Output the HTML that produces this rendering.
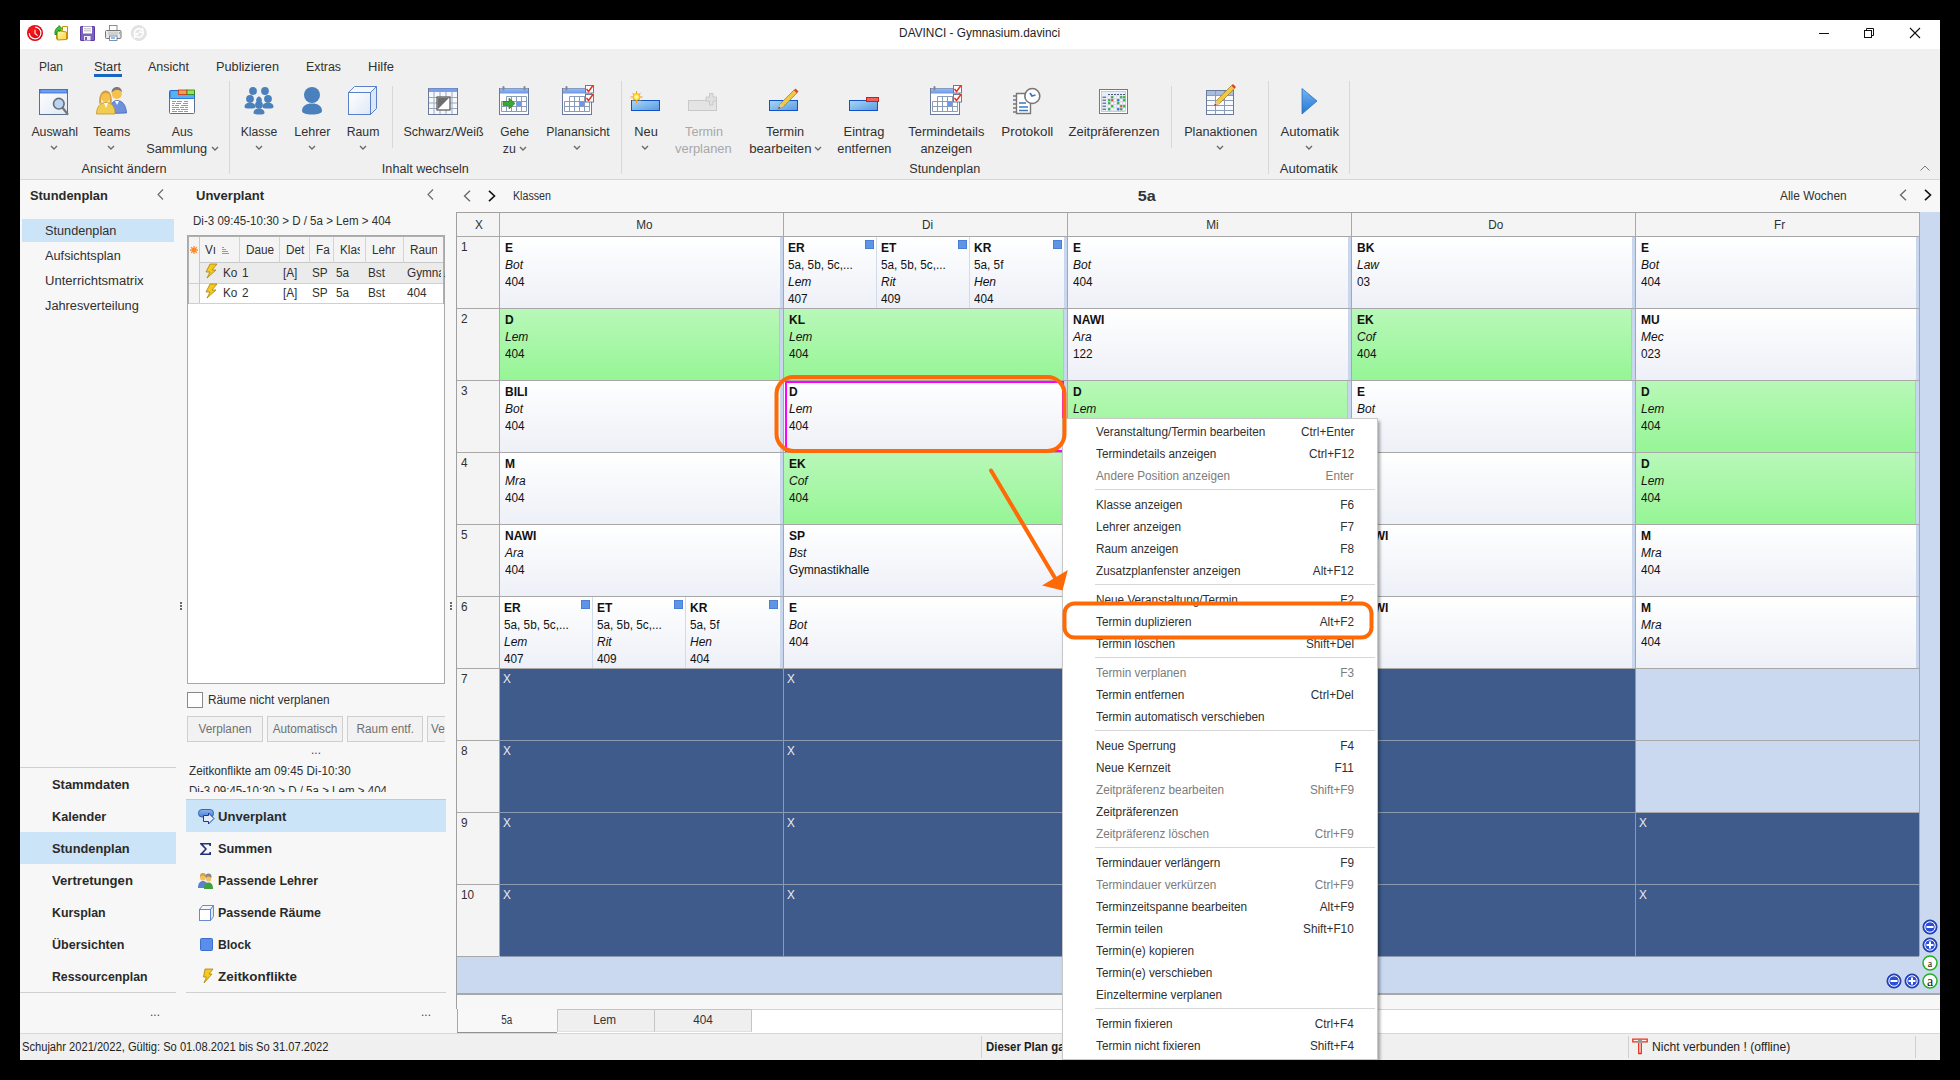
<!DOCTYPE html>
<html><head><meta charset="utf-8"><style>
html,body{margin:0;padding:0;}
body{width:1960px;height:1080px;background:#000;position:relative;overflow:hidden;font-family:"Liberation Sans",sans-serif;color:#262626;}
.r{position:absolute;}
.t{position:absolute;white-space:nowrap;}
</style></head><body>
<div class="r" style="left:20px;top:20px;width:1920px;height:1040px;background:#f7f7f7;"></div>
<div class="r" style="left:20px;top:20px;width:1920px;height:29px;background:#ffffff;"></div>
<div class="t" style="left:898.42px;top:26.84px;font-size:12px;line-height:12px;color:#1e1e1e;transform:scaleX(0.9868);transform-origin:center center;">DAVINCI - Gymnasium.davinci</div>
<div class="r" style="left:1819px;top:33px;width:10px;height:1.2px;background:#111;"></div>
<svg class="r" style="left:1862px;top:26px" width="14" height="14" viewBox="0 0 14 14"><rect x="2.5" y="4.5" width="7" height="7" fill="none" stroke="#111"/><path d="M4.5 4.5V2.5h7v7h-2" fill="none" stroke="#111"/></svg>
<svg class="r" style="left:1908px;top:26px" width="14" height="14" viewBox="0 0 14 14"><path d="M2 2L12 12M12 2L2 12" stroke="#111" stroke-width="1.1"/></svg>
<svg class="r" style="left:20px;top:20px" width="140" height="29" viewBox="20 20 140 29">
<defs><radialGradient id="qRed" cx="0.35" cy="0.35" r="0.7"><stop offset="0" stop-color="#ff1a1a"/><stop offset="1" stop-color="#d00010"/></radialGradient>
<linearGradient id="qFold" x1="0" y1="0" x2="1" y2="1"><stop offset="0" stop-color="#fff8c0"/><stop offset="1" stop-color="#f8d838"/></linearGradient></defs>
<circle cx="35" cy="33" r="8" fill="url(#qRed)"/>
<path d="M29.3 33.2A5.8 5.8 0 1 0 35.2 27.2" fill="none" stroke="#fff" stroke-width="1.2"/>
<path d="M35 29.8V33.5L37.6 35.6" fill="none" stroke="#fff" stroke-width="1.1"/>
<path d="M62.5 26.5h5v12.5h-11v-8.5h6z" fill="#fffbe0" stroke="#c8900a" stroke-width="1"/>
<path d="M57 30.5l9.5 1.5v7.5l-9 0.5z" fill="url(#qFold)" stroke="#c8900a" stroke-width="1"/>
<path d="M55 34.5c-0.5-4 1-7 4-7.5v-1.5l3 3-3 3v-1.5c-1.5 0.5-2.5 2.5-2.5 4.5z" fill="#3cc83c" stroke="#0a800a" stroke-width="0.8"/>
<rect x="80.5" y="26.5" width="14" height="14" rx="0.5" fill="#7a62c0" stroke="#5a3aa8"/>
<rect x="83" y="26.5" width="9" height="7" fill="#fff"/>
<path d="M84 28.8h7M84 30.8h7" stroke="#aaa" stroke-width="0.8"/>
<rect x="84" y="36" width="6.5" height="4.5" fill="#eee"/><rect x="85.2" y="37" width="1.6" height="3" fill="#5a3aa8"/>
<rect x="109.5" y="25.5" width="7.5" height="5" fill="#fff" stroke="#5a7898" stroke-width="0.8"/>
<rect x="105.5" y="30.5" width="15.5" height="8" rx="1" fill="#e8e8e8" stroke="#777" stroke-width="1"/>
<rect x="108" y="31.5" width="10" height="3.5" fill="#d0d0d0"/>
<rect x="109.5" y="36" width="7.5" height="4.5" fill="#fff" stroke="#5a7898" stroke-width="0.8"/><rect x="111" y="37" width="4" height="2" fill="#8ac0f0"/>
<circle cx="119.5" cy="33" r="0.7" fill="#2c2"/>
<circle cx="138.8" cy="33" r="7.5" fill="#e4e4e4" stroke="#dadada" stroke-width="0.8"/>
<path d="M134.5 33a4.3 4.3 0 0 1 7.3-3l0.8-1.2 0.6 3.8-3.6-0.6 1-1M143 33a4.3 4.3 0 0 1-7.3 3l-0.8 1.2-0.6-3.8 3.6 0.6-1 1" fill="none" stroke="#fff" stroke-width="1.4"/>
</svg>
<div class="r" style="left:20px;top:49px;width:1920px;height:130px;background:#f0f0f0;"></div>
<div class="r" style="left:20px;top:179px;width:1920px;height:1px;background:#d6d6d6;"></div>
<div class="t" style="left:39.00px;top:60.84px;font-size:12px;line-height:12px;color:#303030;transform:scaleX(0.9992);transform-origin:left center;">Plan</div>
<div class="t" style="left:94.00px;top:60.84px;font-size:12px;line-height:12px;color:#303030;transform:scaleX(1.0654);transform-origin:left center;">Start</div>
<div class="t" style="left:148.00px;top:60.84px;font-size:12px;line-height:12px;color:#303030;transform:scaleX(1.0419);transform-origin:left center;">Ansicht</div>
<div class="t" style="left:216.00px;top:60.84px;font-size:12px;line-height:12px;color:#303030;transform:scaleX(1.0611);transform-origin:left center;">Publizieren</div>
<div class="t" style="left:306.00px;top:60.84px;font-size:12px;line-height:12px;color:#303030;transform:scaleX(1.0291);transform-origin:left center;">Extras</div>
<div class="t" style="left:368.00px;top:60.84px;font-size:12px;line-height:12px;color:#303030;transform:scaleX(1.0830);transform-origin:left center;">Hilfe</div>
<div class="r" style="left:94px;top:74px;width:28px;height:3px;background:#1665c1;"></div>
<div class="r" style="left:229px;top:81px;width:1px;height:93px;background:#d8d8d8;"></div>
<div class="r" style="left:621px;top:81px;width:1px;height:93px;background:#d8d8d8;"></div>
<div class="r" style="left:1268px;top:81px;width:1px;height:93px;background:#d8d8d8;"></div>
<div class="r" style="left:1349px;top:81px;width:1px;height:93px;background:#d8d8d8;"></div>
<div class="r" style="left:392px;top:86px;width:1px;height:62px;background:#d8d8d8;"></div>
<div class="r" style="left:1171px;top:86px;width:1px;height:62px;background:#d8d8d8;"></div>
<div class="t" style="left:83.97px;top:162.84px;font-size:12px;line-height:12px;color:#303030;transform:scaleX(1.0618);transform-origin:center center;">Ansicht ändern</div>
<div class="t" style="left:383.64px;top:162.84px;font-size:12px;line-height:12px;color:#303030;transform:scaleX(1.0518);transform-origin:center center;">Inhalt wechseln</div>
<div class="t" style="left:911.30px;top:162.84px;font-size:12px;line-height:12px;color:#303030;transform:scaleX(1.0535);transform-origin:center center;">Stundenplan</div>
<div class="t" style="left:1282.32px;top:162.84px;font-size:12px;line-height:12px;color:#303030;transform:scaleX(1.0870);transform-origin:center center;">Automatik</div>
<svg class="r" style="left:1920px;top:165px" width="10" height="6" viewBox="0 0 10 6"><path d="M0.5 5.5L5 1L9.5 5.5" fill="none" stroke="#777" stroke-width="1"/></svg>
<div class="t" style="left:31.82px;top:125.84px;font-size:12px;line-height:12px;color:#303030;transform:scaleX(1.0274);transform-origin:center center;">Auswahl</div>
<svg class="r" style="left:50px;top:145px" width="8" height="6" viewBox="0 0 8 6"><path d="M1 1L4 4L7 1" fill="none" stroke="#6a6a6a" stroke-width="1.4"/></svg>
<div class="t" style="left:93.83px;top:125.84px;font-size:12px;line-height:12px;color:#303030;transform:scaleX(1.0468);transform-origin:center center;">Teams</div>
<svg class="r" style="left:107px;top:145px" width="8" height="6" viewBox="0 0 8 6"><path d="M1 1L4 4L7 1" fill="none" stroke="#6a6a6a" stroke-width="1.4"/></svg>
<div class="t" style="left:171.66px;top:125.84px;font-size:12px;line-height:12px;color:#303030;transform:scaleX(1.0156);transform-origin:center center;">Aus</div>
<div class="t" style="left:148.32px;top:142.84px;font-size:12px;line-height:12px;color:#303030;transform:scaleX(1.0635);transform-origin:center center;">Sammlung</div>
<svg class="r" style="left:211px;top:146px" width="8" height="6" viewBox="0 0 8 6"><path d="M1 1L4 4L7 1" fill="none" stroke="#6a6a6a" stroke-width="1.4"/></svg>
<div class="t" style="left:240.99px;top:125.84px;font-size:12px;line-height:12px;color:#303030;transform:scaleX(1.0134);transform-origin:center center;">Klasse</div>
<svg class="r" style="left:255px;top:145px" width="8" height="6" viewBox="0 0 8 6"><path d="M1 1L4 4L7 1" fill="none" stroke="#6a6a6a" stroke-width="1.4"/></svg>
<div class="t" style="left:295.16px;top:125.84px;font-size:12px;line-height:12px;color:#303030;transform:scaleX(1.0464);transform-origin:center center;">Lehrer</div>
<svg class="r" style="left:308px;top:145px" width="8" height="6" viewBox="0 0 8 6"><path d="M1 1L4 4L7 1" fill="none" stroke="#6a6a6a" stroke-width="1.4"/></svg>
<div class="t" style="left:347.49px;top:125.84px;font-size:12px;line-height:12px;color:#303030;transform:scaleX(1.0215);transform-origin:center center;">Raum</div>
<svg class="r" style="left:359px;top:145px" width="8" height="6" viewBox="0 0 8 6"><path d="M1 1L4 4L7 1" fill="none" stroke="#6a6a6a" stroke-width="1.4"/></svg>
<div class="t" style="left:405.44px;top:125.84px;font-size:12px;line-height:12px;color:#303030;transform:scaleX(1.0372);transform-origin:center center;">Schwarz/Weiß</div>
<div class="t" style="left:500.32px;top:125.84px;font-size:12px;line-height:12px;color:#303030;transform:scaleX(0.9879);transform-origin:center center;">Gehe</div>
<div class="t" style="left:503.16px;top:142.84px;font-size:12px;line-height:12px;color:#303030;transform:scaleX(1.0257);transform-origin:center center;">zu</div>
<svg class="r" style="left:519px;top:146px" width="8" height="6" viewBox="0 0 8 6"><path d="M1 1L4 4L7 1" fill="none" stroke="#6a6a6a" stroke-width="1.4"/></svg>
<div class="t" style="left:546.98px;top:125.84px;font-size:12px;line-height:12px;color:#303030;transform:scaleX(1.0203);transform-origin:center center;">Planansicht</div>
<svg class="r" style="left:573px;top:145px" width="8" height="6" viewBox="0 0 8 6"><path d="M1 1L4 4L7 1" fill="none" stroke="#6a6a6a" stroke-width="1.4"/></svg>
<div class="t" style="left:634.99px;top:125.84px;font-size:12px;line-height:12px;color:#303030;transform:scaleX(1.0675);transform-origin:center center;">Neu</div>
<svg class="r" style="left:641px;top:145px" width="8" height="6" viewBox="0 0 8 6"><path d="M1 1L4 4L7 1" fill="none" stroke="#6a6a6a" stroke-width="1.4"/></svg>
<div class="t" style="left:686.00px;top:125.84px;font-size:12px;line-height:12px;color:#a8a8a8;transform:scaleX(1.0498);transform-origin:center center;">Termin</div>
<div class="t" style="left:677.15px;top:142.84px;font-size:12px;line-height:12px;color:#a8a8a8;transform:scaleX(1.0758);transform-origin:center center;">verplanen</div>
<div class="t" style="left:766.70px;top:125.84px;font-size:12px;line-height:12px;color:#303030;transform:scaleX(1.0609);transform-origin:center center;">Termin</div>
<div class="t" style="left:751.64px;top:142.84px;font-size:12px;line-height:12px;color:#303030;transform:scaleX(1.0985);transform-origin:center center;">bearbeiten</div>
<svg class="r" style="left:814px;top:146px" width="8" height="6" viewBox="0 0 8 6"><path d="M1 1L4 4L7 1" fill="none" stroke="#6a6a6a" stroke-width="1.4"/></svg>
<div class="t" style="left:845.49px;top:125.84px;font-size:12px;line-height:12px;color:#303030;transform:scaleX(1.0730);transform-origin:center center;">Eintrag</div>
<div class="t" style="left:839.15px;top:142.84px;font-size:12px;line-height:12px;color:#303030;transform:scaleX(1.0649);transform-origin:center center;">entfernen</div>
<div class="t" style="left:910.65px;top:125.84px;font-size:12px;line-height:12px;color:#303030;transform:scaleX(1.0750);transform-origin:center center;">Termindetails</div>
<div class="t" style="left:921.64px;top:142.84px;font-size:12px;line-height:12px;color:#303030;transform:scaleX(1.0614);transform-origin:center center;">anzeigen</div>
<div class="t" style="left:1003.66px;top:125.84px;font-size:12px;line-height:12px;color:#303030;transform:scaleX(1.1137);transform-origin:center center;">Protokoll</div>
<div class="t" style="left:1072.48px;top:125.84px;font-size:12px;line-height:12px;color:#303030;transform:scaleX(1.0827);transform-origin:center center;">Zeitpräferenzen</div>
<div class="t" style="left:1185.81px;top:125.84px;font-size:12px;line-height:12px;color:#303030;transform:scaleX(1.0520);transform-origin:center center;">Planaktionen</div>
<svg class="r" style="left:1216px;top:145px" width="8" height="6" viewBox="0 0 8 6"><path d="M1 1L4 4L7 1" fill="none" stroke="#6a6a6a" stroke-width="1.4"/></svg>
<div class="t" style="left:1282.62px;top:125.84px;font-size:12px;line-height:12px;color:#303030;transform:scaleX(1.0983);transform-origin:center center;">Automatik</div>
<svg class="r" style="left:1305px;top:145px" width="8" height="6" viewBox="0 0 8 6"><path d="M1 1L4 4L7 1" fill="none" stroke="#6a6a6a" stroke-width="1.4"/></svg>
<svg class="r" style="left:0;top:0" width="1960" height="180" viewBox="0 0 1960 180">
<defs>
<linearGradient id="gBar" x1="0" y1="0" x2="1" y2="1"><stop offset="0" stop-color="#a8d8f8"/><stop offset="1" stop-color="#5a9ae0"/></linearGradient>
<linearGradient id="gWin" x1="0" y1="0" x2="1" y2="1"><stop offset="0" stop-color="#ffffff"/><stop offset="1" stop-color="#dfe8f6"/></linearGradient>
<linearGradient id="gHdr" x1="0" y1="0" x2="0" y2="1"><stop offset="0" stop-color="#9bbcf4"/><stop offset="1" stop-color="#6b96e8"/></linearGradient>
<linearGradient id="gTri" x1="0" y1="0" x2="0" y2="1"><stop offset="0" stop-color="#7ab8f0"/><stop offset="0.5" stop-color="#4a94e2"/><stop offset="1" stop-color="#2a78d0"/></linearGradient>
<radialGradient id="gSun"><stop offset="0" stop-color="#ffffe0"/><stop offset="0.6" stop-color="#ffe840"/><stop offset="1" stop-color="#f0a020"/></radialGradient>
</defs>
<!-- Auswahl -->
<rect x="39.5" y="89.5" width="28" height="25" fill="url(#gWin)" stroke="#5a7090"/>
<rect x="40" y="89.5" width="27" height="3.5" fill="#6d9cf0" stroke="#3a6ad8" stroke-width="0.8"/>
<path d="M62 107L67.5 114" stroke="#777" stroke-width="2.2" stroke-linecap="round"/>
<circle cx="58.8" cy="103.7" r="5.3" fill="#b8d4f4" stroke="#6c6c6c" stroke-width="1.6"/>
<!-- Teams -->
<path d="M113 113c0-6-3-10-7-10h-2c4 0 7 4 7 10z" fill="#6a8ad8"/>
<path d="M110 113.5c-1-7 2-13 7-13s9 4 9.5 12.5z" fill="#6f90da" stroke="#4468b8" stroke-width="0.8"/>
<path d="M115 101l2 4 2-4z" fill="#fff"/>
<circle cx="116.8" cy="94" r="5" fill="#f6c04c"/>
<path d="M111.5 93c0-4 2.5-6 5.3-6s5.3 2 5.3 5.5c-1-2-3-2.8-5-2.8s-4.5 1.3-5.6 3.3z" fill="#7a7a7a"/>
<path d="M96.5 114c0-7 3.5-11.5 9.5-11.5s9 4.5 9 11.5z" fill="#f2cc50" stroke="#c09a20" stroke-width="0.8"/>
<path d="M104 103l2 5 2-5z" fill="#fff"/>
<path d="M99.5 104c-1-4 0-13 6-13.5s7 9 6 13.5l-2-1c1-3 0-8-4-8s-5 5-4 8z" fill="#d0a040"/>
<circle cx="105.7" cy="97.5" r="4.6" fill="#f6c04c"/>
<!-- Aus Sammlung -->
<rect x="169.5" y="90.5" width="25" height="23" rx="1" fill="#fff" stroke="#5a7090"/>
<rect x="170" y="90.5" width="24.5" height="8" rx="1" fill="#58b0f0" stroke="#1060d0" stroke-width="0.8"/>
<rect x="178.5" y="90" width="8.5" height="4.5" fill="#f0a050" stroke="#d03010" stroke-width="0.8"/>
<rect x="187" y="90" width="7.5" height="4.5" fill="#98e060" stroke="#308010" stroke-width="0.8"/>
<g stroke="#8a9ab8" stroke-width="1">
<path d="M172 101.5h4M177 101.5h5M184 101.5h4M172 103.5h3M176 103.5h5M183 103.5h5M172 105.5h2M175 105.5h4M181 105.5h7M172 107.5h7M180 107.5h4M185 107.5h3M172 109.5h3M176 109.5h4M181 109.5h7M172 111.5h5M178 111.5h5M184 111.5h4"/>
</g>
<!-- Klasse -->
<g fill="#4a80bc">
<circle cx="253" cy="91" r="3.9"/><circle cx="265" cy="91" r="3.9"/>
<path d="M256 101c0-3 2-4.5 3-4.5v7z"/><path d="M262 101c0-3-2-4.5-3-4.5v7z"/>
<circle cx="250" cy="98.8" r="3.9"/><circle cx="268" cy="98.8" r="3.9"/>
<path d="M244.5 107c0-3 2.5-4.5 5.5-4.5s5.5 1.5 5.5 4.5c0 1-2 1.5-5.5 1.5s-5.5-.5-5.5-1.5z"/>
<path d="M262.5 107c0-3 2.5-4.5 5.5-4.5s5.5 1.5 5.5 4.5c0 1-2 1.5-5.5 1.5s-5.5-.5-5.5-1.5z"/>
<circle cx="259" cy="104.8" r="3.9"/>
<path d="M253.5 113c0-3 2.5-4.5 5.5-4.5s5.5 1.5 5.5 4.5c0 1-2 1.5-5.5 1.5s-5.5-.5-5.5-1.5z"/>
</g>
<!-- Lehrer -->
<g fill="#4a80bc"><circle cx="312" cy="95" r="8"/><path d="M302 111c0-5 4-7.5 10-7.5s10 2.5 10 7.5c0 2-4 3.5-10 3.5s-10-1.5-10-3.5z"/></g>
<!-- Raum -->
<path d="M348.5 92.5L354.5 86.5H376.5L370.5 92.5Z" fill="#f4f8fe" stroke="#5a80c8"/>
<path d="M370.5 92.5L376.5 86.5V108.5L370.5 114.5Z" fill="#dce8fa" stroke="#5a80c8"/>
<rect x="348.5" y="92.5" width="22" height="22" fill="url(#gWin)" stroke="#5a80c8"/>
<!-- Schwarz/Weiss -->
<rect x="428.5" y="88.5" width="29" height="26" fill="#f6f8fc" stroke="#6a7a98"/>
<rect x="429" y="88.5" width="28" height="3.5" fill="#78a0ee"/>
<g stroke="#98a8c0" stroke-width="1"><path d="M434 92v22M440 92v22M446 92v22M452 92v22M429 97.5h28M429 103h28M429 108.5h28"/></g>
<rect x="437" y="97" width="13" height="13" fill="#fff" stroke="#555" stroke-width="1.2"/>
<path d="M437.6 97.6h11.8L437.6 109.4z" fill="#6e6e6e"/>
<!-- Gehe zu -->
<rect x="499.5" y="88.5" width="29" height="26" fill="#fff" stroke="#6a7a98"/>
<rect x="500" y="88.5" width="28" height="5" fill="url(#gHdr)"/>
<rect x="502.5" y="86" width="2" height="4.5" rx="1" fill="#888"/><rect x="523.5" y="86" width="2" height="4.5" rx="1" fill="#888"/>
<g stroke="#8a9cbc" stroke-width="1" fill="none"><path d="M506.5 96.5h20v15h-25v-10h5zM506.5 101.5v10M511.5 96.5v15M516.5 96.5v15M521.5 96.5v15M501.5 106.5h25M506.5 101.5h20"/></g>
<rect x="517" y="102" width="4" height="4" fill="#6a9af0"/>
<path d="M503 101.5h6v-3.5l6 5.5-6 5.5v-3.5h-6z" fill="#3aa830" stroke="#1a7010" stroke-width="0.6"/>
<!-- Planansicht -->
<rect x="562.5" y="88.5" width="29" height="26" fill="#fff" stroke="#6a7a98"/>
<rect x="563" y="88.5" width="28" height="5" fill="url(#gHdr)"/>
<rect x="565.5" y="86" width="2" height="4.5" rx="1" fill="#888"/>
<g stroke="#8a9cbc" stroke-width="1" fill="none"><path d="M569.5 96.5h20v15h-25v-10h5zM569.5 101.5v10M574.5 96.5v15M579.5 96.5v15M584.5 96.5v15M564.5 106.5h25M569.5 101.5h20"/></g>
<rect x="580" y="102" width="4" height="4" fill="#6a9af0"/>
<rect x="585.5" y="85.5" width="8" height="7.5" fill="#fff" stroke="#6a7a98"/><path d="M586.5 89l2 2.5 4.5-6" fill="none" stroke="#e8301a" stroke-width="1.5"/>
<rect x="585.5" y="94.5" width="8" height="7.5" fill="#fff" stroke="#6a7a98"/><path d="M586.5 98l2 2.5 4.5-6" fill="none" stroke="#e8301a" stroke-width="1.5"/>
<!-- Neu -->
<rect x="631.5" y="100.5" width="28" height="10" fill="url(#gBar)" stroke="#1050c8"/>
<g stroke="#f0a020" stroke-width="1"><path d="M636.5 91v12M630.5 97h12M632.3 92.8l8.4 8.4M640.7 92.8l-8.4 8.4"/></g>
<circle cx="636.5" cy="97" r="3.8" fill="url(#gSun)"/>
<!-- Termin verplanen -->
<rect x="688.5" y="100.5" width="28" height="10" fill="#e4e4e4" stroke="#c8c8c8"/>
<path d="M709.5 93.5h3.5v3.5h3.5v4h-3.5v4h-3.5v-4h-3.5v-4h3.5z" fill="#e0e0e0" stroke="#c8c8c8"/>
<!-- Termin bearbeiten -->
<rect x="769.5" y="100.5" width="28" height="10" fill="url(#gBar)" stroke="#1050c8"/>
<path d="M778.5 108.5l2-5 13.5-13.5 3 3-13.5 13.5z" fill="#f0c848" stroke="#a07818" stroke-width="0.7"/>
<path d="M778.5 108.5l2-5 3 3z" fill="#e8c8a0"/><path d="M778.3 108.7l0.8-2 1.2 1.2z" fill="#333"/>
<path d="M794 90l1.5-1.5 3 3-1.5 1.5z" fill="#e84020"/>
<!-- Eintrag entfernen -->
<rect x="849.5" y="100.5" width="28" height="10" fill="url(#gBar)" stroke="#1050c8"/>
<rect x="866.5" y="97.5" width="12" height="4" fill="#f06060" stroke="#c82010"/>
<!-- Termindetails -->
<rect x="930.5" y="88.5" width="29" height="26" fill="#fff" stroke="#6a7a98"/>
<rect x="931" y="88.5" width="28" height="5" fill="url(#gHdr)"/>
<rect x="933.5" y="86" width="2" height="4.5" rx="1" fill="#888"/>
<g stroke="#8a9cbc" stroke-width="1" fill="none"><path d="M937.5 96.5h20v15h-25v-10h5zM937.5 101.5v10M942.5 96.5v15M947.5 96.5v15M952.5 96.5v15M932.5 106.5h25M937.5 101.5h20"/></g>
<rect x="948" y="102" width="4" height="4" fill="#6a9af0"/>
<rect x="953.5" y="85.5" width="8" height="7.5" fill="#fff" stroke="#6a7a98"/><path d="M954.5 89l2 2.5 4.5-6" fill="none" stroke="#e8301a" stroke-width="1.5"/>
<rect x="953.5" y="94.5" width="8" height="7.5" fill="#fff" stroke="#6a7a98"/><path d="M954.5 98l2 2.5 4.5-6" fill="none" stroke="#e8301a" stroke-width="1.5"/>
<!-- Protokoll -->
<path d="M1016.5 93.5h14v20h-14z" fill="#fff" stroke="#777" stroke-width="1.4"/>
<g stroke="#777" stroke-width="1.6"><path d="M1013 96h4M1013 100h4M1013 104h4M1013 108h4M1013 112h4"/></g>
<g stroke="#3a78c0" stroke-width="1.3"><path d="M1019 103h7M1019 107h9M1019 110.5h9"/></g>
<circle cx="1032.3" cy="96" r="7.5" fill="#fff" stroke="#777" stroke-width="1.6"/>
<path d="M1030 93l2 3 3.5-1" fill="none" stroke="#3a78c0" stroke-width="1.8"/>
<!-- Zeitpraeferenzen -->
<rect x="1099.5" y="89.5" width="28" height="24" fill="#fff" stroke="#6a7a98"/>
<rect x="1101.5" y="91.5" width="24" height="20" fill="#e8eef8" stroke="#a8b4c8" stroke-width="0.6"/>
<path d="M1108 94.5h2" stroke="#4a5a80" stroke-width="1"/>
<path d="M1111 94.5h2" stroke="#4a5a80" stroke-width="1"/>
<path d="M1114 94.5h2" stroke="#4a5a80" stroke-width="1"/>
<path d="M1117 94.5h2" stroke="#4a5a80" stroke-width="1"/>
<path d="M1120 94.5h2" stroke="#4a5a80" stroke-width="1"/>
<path d="M1123 94.5h2" stroke="#4a5a80" stroke-width="1"/>
<path d="M1102.5 97.2h3.5" stroke="#4a5a80" stroke-width="1.1"/>
<rect x="1108" y="96" width="2.4" height="2.4" fill="#ffffff" stroke="#b8c0d0" stroke-width="0.4"/>
<rect x="1111" y="96" width="2.4" height="2.4" fill="#30b030" stroke="#b8c0d0" stroke-width="0.4"/>
<rect x="1114" y="96" width="2.4" height="2.4" fill="#ffffff" stroke="#b8c0d0" stroke-width="0.4"/>
<rect x="1117" y="96" width="2.4" height="2.4" fill="#ffffff" stroke="#b8c0d0" stroke-width="0.4"/>
<rect x="1120" y="96" width="2.4" height="2.4" fill="#30b030" stroke="#b8c0d0" stroke-width="0.4"/>
<rect x="1123" y="96" width="2.4" height="2.4" fill="#30b030" stroke="#b8c0d0" stroke-width="0.4"/>
<path d="M1102.5 100.2h3.5" stroke="#4a5a80" stroke-width="1.1"/>
<rect x="1108" y="99" width="2.4" height="2.4" fill="#30b030" stroke="#b8c0d0" stroke-width="0.4"/>
<rect x="1111" y="99" width="2.4" height="2.4" fill="#e84a2a" stroke="#b8c0d0" stroke-width="0.4"/>
<rect x="1114" y="99" width="2.4" height="2.4" fill="#ffffff" stroke="#b8c0d0" stroke-width="0.4"/>
<rect x="1117" y="99" width="2.4" height="2.4" fill="#2a6ae0" stroke="#b8c0d0" stroke-width="0.4"/>
<rect x="1120" y="99" width="2.4" height="2.4" fill="#ffffff" stroke="#b8c0d0" stroke-width="0.4"/>
<rect x="1123" y="99" width="2.4" height="2.4" fill="#30b030" stroke="#b8c0d0" stroke-width="0.4"/>
<path d="M1102.5 103.2h3.5" stroke="#4a5a80" stroke-width="1.1"/>
<rect x="1108" y="102" width="2.4" height="2.4" fill="#30b030" stroke="#b8c0d0" stroke-width="0.4"/>
<rect x="1111" y="102" width="2.4" height="2.4" fill="#ffffff" stroke="#b8c0d0" stroke-width="0.4"/>
<rect x="1114" y="102" width="2.4" height="2.4" fill="#ffffff" stroke="#b8c0d0" stroke-width="0.4"/>
<rect x="1117" y="102" width="2.4" height="2.4" fill="#30b030" stroke="#b8c0d0" stroke-width="0.4"/>
<rect x="1120" y="102" width="2.4" height="2.4" fill="#ffffff" stroke="#b8c0d0" stroke-width="0.4"/>
<rect x="1123" y="102" width="2.4" height="2.4" fill="#ffffff" stroke="#b8c0d0" stroke-width="0.4"/>
<path d="M1102.5 106.2h3.5" stroke="#4a5a80" stroke-width="1.1"/>
<rect x="1108" y="105" width="2.4" height="2.4" fill="#ffffff" stroke="#b8c0d0" stroke-width="0.4"/>
<rect x="1111" y="105" width="2.4" height="2.4" fill="#30b030" stroke="#b8c0d0" stroke-width="0.4"/>
<rect x="1114" y="105" width="2.4" height="2.4" fill="#ffffff" stroke="#b8c0d0" stroke-width="0.4"/>
<rect x="1117" y="105" width="2.4" height="2.4" fill="#ffffff" stroke="#b8c0d0" stroke-width="0.4"/>
<rect x="1120" y="105" width="2.4" height="2.4" fill="#e84a2a" stroke="#b8c0d0" stroke-width="0.4"/>
<rect x="1123" y="105" width="2.4" height="2.4" fill="#30b030" stroke="#b8c0d0" stroke-width="0.4"/>
<path d="M1102.5 109.2h3.5" stroke="#4a5a80" stroke-width="1.1"/>
<rect x="1108" y="108" width="2.4" height="2.4" fill="#30b030" stroke="#b8c0d0" stroke-width="0.4"/>
<rect x="1111" y="108" width="2.4" height="2.4" fill="#ffffff" stroke="#b8c0d0" stroke-width="0.4"/>
<rect x="1114" y="108" width="2.4" height="2.4" fill="#ffffff" stroke="#b8c0d0" stroke-width="0.4"/>
<rect x="1117" y="108" width="2.4" height="2.4" fill="#2a6ae0" stroke="#b8c0d0" stroke-width="0.4"/>
<rect x="1120" y="108" width="2.4" height="2.4" fill="#30b030" stroke="#b8c0d0" stroke-width="0.4"/>
<rect x="1123" y="108" width="2.4" height="2.4" fill="#ffffff" stroke="#b8c0d0" stroke-width="0.4"/>
<!-- Planaktionen -->
<rect x="1206.5" y="90.5" width="27" height="24" fill="#f8faff" stroke="#6a7a98"/>
<rect x="1207" y="91" width="26" height="4.5" fill="#a8bce0"/>
<g stroke="#8a9cbc" stroke-width="1"><path d="M1215.5 91v23M1224.5 91v23M1207 95.5h26M1207 100.5h26M1207 105.5h26M1207 110.5h26"/></g>
<path d="M1214.5 105.5l2-5 15-15 3 3-15 15z" fill="#f0c848" stroke="#a07818" stroke-width="0.7"/>
<path d="M1214.5 105.5l2-5 3 3z" fill="#e8c8a0"/><path d="M1214.3 105.7l0.8-2 1.2 1.2z" fill="#333"/>
<path d="M1231.5 85.5l1.5-1.5 3 3-1.5 1.5z" fill="#e84020"/>
<!-- Automatik -->
<path d="M1302 88.5L1317 101L1302 114z" fill="url(#gTri)" stroke="#2a70c8" stroke-width="0.8" stroke-linejoin="round"/>
</svg>

<div class="t" style="left:30.00px;top:189.00px;font-size:13px;line-height:13px;font-weight:700;color:#2a2a2a;transform:scaleX(0.9883);transform-origin:left center;">Stundenplan</div>
<svg class="r" style="left:157px;top:189px" width="7" height="11" viewBox="0 0 7 11"><path d="M6 0.5L1 5.5L6 10.5" fill="none" stroke="#666" stroke-width="1.1"/></svg>
<div class="r" style="left:22px;top:219px;width:152px;height:23px;background:#cce4f7;"></div>
<div class="t" style="left:45.00px;top:225.42px;font-size:12.5px;line-height:12.5px;color:#303030;transform:scaleX(1.0170);transform-origin:left center;">Stundenplan</div>
<div class="t" style="left:45.00px;top:250.42px;font-size:12.5px;line-height:12.5px;color:#303030;transform:scaleX(1.0195);transform-origin:left center;">Aufsichtsplan</div>
<div class="t" style="left:45.00px;top:275.42px;font-size:12.5px;line-height:12.5px;color:#303030;transform:scaleX(1.0438);transform-origin:left center;">Unterrichtsmatrix</div>
<div class="t" style="left:45.00px;top:300.42px;font-size:12.5px;line-height:12.5px;color:#303030;transform:scaleX(1.0227);transform-origin:left center;">Jahresverteilung</div>
<div class="r" style="left:180px;top:602px;width:2px;height:2px;background:#686868;"></div>
<div class="r" style="left:180px;top:605px;width:2px;height:2px;background:#686868;"></div>
<div class="r" style="left:180px;top:608px;width:2px;height:2px;background:#686868;"></div>
<div class="r" style="left:450px;top:602px;width:2px;height:2px;background:#686868;"></div>
<div class="r" style="left:450px;top:605px;width:2px;height:2px;background:#686868;"></div>
<div class="r" style="left:450px;top:608px;width:2px;height:2px;background:#686868;"></div>
<div class="r" style="left:20px;top:767px;width:156px;height:1px;background:#d0d0d0;"></div>
<div class="r" style="left:20px;top:832px;width:156px;height:32px;background:#cce4f7;"></div>
<div class="t" style="left:52.00px;top:778.00px;font-size:13px;line-height:13px;font-weight:700;color:#2a2a2a;transform:scaleX(0.9933);transform-origin:left center;">Stammdaten</div>
<div class="t" style="left:52.00px;top:810.00px;font-size:13px;line-height:13px;font-weight:700;color:#2a2a2a;transform:scaleX(0.9761);transform-origin:left center;">Kalender</div>
<div class="t" style="left:52.00px;top:842.00px;font-size:13px;line-height:13px;font-weight:700;color:#2a2a2a;transform:scaleX(0.9858);transform-origin:left center;">Stundenplan</div>
<div class="t" style="left:52.00px;top:874.00px;font-size:13px;line-height:13px;font-weight:700;color:#2a2a2a;transform:scaleX(1.0089);transform-origin:left center;">Vertretungen</div>
<div class="t" style="left:52.00px;top:906.00px;font-size:13px;line-height:13px;font-weight:700;color:#2a2a2a;transform:scaleX(0.9513);transform-origin:left center;">Kursplan</div>
<div class="t" style="left:52.00px;top:938.00px;font-size:13px;line-height:13px;font-weight:700;color:#2a2a2a;transform:scaleX(0.9636);transform-origin:left center;">Übersichten</div>
<div class="t" style="left:52.00px;top:970.00px;font-size:13px;line-height:13px;font-weight:700;color:#2a2a2a;transform:scaleX(0.9442);transform-origin:left center;">Ressourcenplan</div>
<div class="r" style="left:20px;top:992px;width:156px;height:1px;background:#d0d0d0;"></div>
<div class="t" style="left:150.00px;top:1005.84px;font-size:12px;line-height:12px;color:#444;transform:scaleX(0.9800);transform-origin:center center;">...</div>
<div class="t" style="left:196.00px;top:189.00px;font-size:13px;line-height:13px;font-weight:700;color:#2a2a2a;transform:scaleX(1.0014);transform-origin:left center;">Unverplant</div>
<svg class="r" style="left:427px;top:189px" width="7" height="11" viewBox="0 0 7 11"><path d="M6 0.5L1 5.5L6 10.5" fill="none" stroke="#666" stroke-width="1.1"/></svg>
<div class="t" style="left:193.00px;top:214.84px;font-size:12px;line-height:12px;color:#303030;transform:scaleX(0.9621);transform-origin:left center;">Di-3 09:45-10:30 &gt; D / 5a &gt; Lem &gt; 404</div>
<div class="r" style="left:187px;top:235px;width:258px;height:449px;background:#ffffff;box-sizing:border-box;border:1px solid #a8a8a8;"></div>
<div class="r" style="left:188px;top:236px;width:256px;height:1px;background:#b0b0b0;"></div>
<div class="r" style="left:188px;top:236px;width:1px;height:68px;background:#b0b0b0;"></div>
<div class="r" style="left:443px;top:236px;width:1px;height:68px;background:#b0b0b0;"></div>
<div class="r" style="left:189px;top:237px;width:255px;height:26px;background:#f4f4f4;"></div>
<div class="r" style="left:189px;top:262px;width:255px;height:1px;background:#c8c8c8;"></div>
<div class="r" style="left:189px;top:237px;width:11px;height:66px;background:#f4f4f4;"></div>
<div class="r" style="left:200px;top:263px;width:244px;height:20px;background:#ebebeb;"></div>
<div class="r" style="left:189px;top:283px;width:255px;height:1px;background:#d0d0d0;"></div>
<div class="r" style="left:189px;top:303px;width:255px;height:1px;background:#d0d0d0;"></div>
<div class="r" style="left:199px;top:237px;width:1px;height:66px;background:#c8c8c8;"></div>
<div class="r" style="left:239px;top:237px;width:1px;height:26px;background:#d4d4d4;"></div>
<div class="r" style="left:279px;top:237px;width:1px;height:26px;background:#d4d4d4;"></div>
<div class="r" style="left:309px;top:237px;width:1px;height:26px;background:#d4d4d4;"></div>
<div class="r" style="left:333px;top:237px;width:1px;height:26px;background:#d4d4d4;"></div>
<div class="r" style="left:365px;top:237px;width:1px;height:26px;background:#d4d4d4;"></div>
<div class="r" style="left:403px;top:237px;width:1px;height:26px;background:#d4d4d4;"></div>
<svg class="r" style="left:189px;top:245px" width="10" height="10" viewBox="0 0 10 10"><g stroke="#ff8a2a" stroke-width="1.3"><path d="M5 1V9M1 5H9M2.2 2.2L7.8 7.8M7.8 2.2L2.2 7.8"/></g><circle cx="5" cy="5" r="2" fill="#ff8a2a"/></svg>
<div class="t" style="left:205.00px;top:243.84px;font-size:12px;line-height:12px;color:#303030;transform:scaleX(0.9800);transform-origin:left center;">Vı</div>
<div class="t" style="left:246.00px;top:243.84px;font-size:12px;line-height:12px;color:#303030;transform:scaleX(0.9800);transform-origin:left center;">Daue</div>
<div class="t" style="left:286.00px;top:243.84px;font-size:12px;line-height:12px;color:#303030;transform:scaleX(0.9800);transform-origin:left center;">Det</div>
<div class="t" style="left:316.00px;top:243.84px;font-size:12px;line-height:12px;color:#303030;transform:scaleX(0.9800);transform-origin:left center;">Fa</div>
<div class="t" style="left:340.00px;top:243.84px;font-size:12px;line-height:12px;color:#303030;transform:scaleX(0.9800);transform-origin:left center;">Klas</div>
<div class="t" style="left:372.00px;top:243.84px;font-size:12px;line-height:12px;color:#303030;transform:scaleX(0.9800);transform-origin:left center;">Lehr</div>
<div class="t" style="left:410.00px;top:243.84px;font-size:12px;line-height:12px;color:#303030;transform:scaleX(0.9800);transform-origin:left center;">Raun</div>
<svg class="r" style="left:222px;top:247px" width="7" height="7" viewBox="0 0 7 7"><path d="M0 0.5h2M0 2.5h4M0 4.5h6M0 6.5h7" stroke="#999" stroke-width="1"/></svg>
<div class="t" style="left:223.00px;top:267.34px;font-size:12px;line-height:12px;color:#303030;transform:scaleX(0.9800);transform-origin:left center;">Ko</div>
<div class="t" style="left:242.00px;top:267.34px;font-size:12px;line-height:12px;color:#303030;transform:scaleX(0.9800);transform-origin:left center;">1</div>
<div class="t" style="left:282.50px;top:267.34px;font-size:12px;line-height:12px;color:#303030;transform:scaleX(0.9800);transform-origin:left center;">[A]</div>
<div class="t" style="left:311.50px;top:267.34px;font-size:12px;line-height:12px;color:#303030;transform:scaleX(0.9800);transform-origin:left center;">SP</div>
<div class="t" style="left:336.00px;top:267.34px;font-size:12px;line-height:12px;color:#303030;transform:scaleX(0.9800);transform-origin:left center;">5a</div>
<div class="t" style="left:368.00px;top:267.34px;font-size:12px;line-height:12px;color:#303030;transform:scaleX(0.9800);transform-origin:left center;">Bst</div>
<div class="t" style="left:406.50px;top:267.34px;font-size:12px;line-height:12px;color:#303030;transform:scaleX(0.9800);transform-origin:left center;">Gymna</div>
<svg class="r" style="left:204px;top:263px" width="14" height="16" viewBox="0 0 14 16"><path d="M6 1h7L8 7h4L3 15l3-6H2z" fill="#f6c91e" stroke="#a88010" stroke-width="0.8"/></svg>
<div class="t" style="left:223.00px;top:287.34px;font-size:12px;line-height:12px;color:#303030;transform:scaleX(0.9800);transform-origin:left center;">Ko</div>
<div class="t" style="left:242.00px;top:287.34px;font-size:12px;line-height:12px;color:#303030;transform:scaleX(0.9800);transform-origin:left center;">2</div>
<div class="t" style="left:282.50px;top:287.34px;font-size:12px;line-height:12px;color:#303030;transform:scaleX(0.9800);transform-origin:left center;">[A]</div>
<div class="t" style="left:311.50px;top:287.34px;font-size:12px;line-height:12px;color:#303030;transform:scaleX(0.9800);transform-origin:left center;">SP</div>
<div class="t" style="left:336.00px;top:287.34px;font-size:12px;line-height:12px;color:#303030;transform:scaleX(0.9800);transform-origin:left center;">5a</div>
<div class="t" style="left:368.00px;top:287.34px;font-size:12px;line-height:12px;color:#303030;transform:scaleX(0.9800);transform-origin:left center;">Bst</div>
<div class="t" style="left:406.50px;top:287.34px;font-size:12px;line-height:12px;color:#303030;transform:scaleX(0.9800);transform-origin:left center;">404</div>
<svg class="r" style="left:204px;top:283px" width="14" height="16" viewBox="0 0 14 16"><path d="M6 1h7L8 7h4L3 15l3-6H2z" fill="#f6c91e" stroke="#a88010" stroke-width="0.8"/></svg>
<div class="r" style="left:441px;top:264px;width:2px;height:19px;background:#ebebeb;"></div>
<div class="r" style="left:443px;top:236px;width:1px;height:68px;background:#b0b0b0;"></div>
<div class="r" style="left:360px;top:240px;width:5px;height:20px;background:#f4f4f4;"></div>
<div class="r" style="left:398px;top:240px;width:5px;height:20px;background:#f4f4f4;"></div>
<div class="r" style="left:437px;top:240px;width:6px;height:20px;background:#f4f4f4;"></div>
<div class="r" style="left:187px;top:692px;width:16px;height:16px;background:#ffffff;box-sizing:border-box;border:1px solid #8a8a8a;"></div>
<div class="t" style="left:208.00px;top:693.84px;font-size:12px;line-height:12px;color:#303030;transform:scaleX(0.9854);transform-origin:left center;">Räume nicht verplanen</div>
<div class="r" style="left:187px;top:716px;width:76px;height:26px;background:#f2f2f2;box-sizing:border-box;border:1px solid #cfcfcf;"></div>
<div class="t" style="left:197.98px;top:722.84px;font-size:12px;line-height:12px;color:#707070;transform:scaleX(0.9800);transform-origin:center center;">Verplanen</div>
<div class="r" style="left:267px;top:716px;width:76px;height:26px;background:#f2f2f2;box-sizing:border-box;border:1px solid #cfcfcf;"></div>
<div class="t" style="left:271.98px;top:722.84px;font-size:12px;line-height:12px;color:#707070;transform:scaleX(0.9800);transform-origin:center center;">Automatisch</div>
<div class="r" style="left:347px;top:716px;width:76px;height:26px;background:#f2f2f2;box-sizing:border-box;border:1px solid #cfcfcf;"></div>
<div class="t" style="left:355.65px;top:722.84px;font-size:12px;line-height:12px;color:#707070;transform:scaleX(0.9800);transform-origin:center center;">Raum entf.</div>
<div class="r" style="left:427px;top:716px;width:18px;height:26px;background:#f2f2f2;box-sizing:border-box;border:1px solid #cfcfcf;border-right:none;overflow:hidden;"></div>
<div class="t" style="left:431.00px;top:722.84px;font-size:12px;line-height:12px;color:#707070;transform:scaleX(0.9800);transform-origin:left center;">Ve</div>
<div class="t" style="left:311.00px;top:743.84px;font-size:12px;line-height:12px;color:#444;transform:scaleX(0.9800);transform-origin:center center;">...</div>
<div class="t" style="left:189.00px;top:764.84px;font-size:12px;line-height:12px;color:#303030;transform:scaleX(0.9742);transform-origin:left center;">Zeitkonflikte am 09:45 Di-10:30</div>
<div class="r" style="left:186px;top:780px;width:260px;height:12px;overflow:hidden">
<div class="t" style="left:3.00px;top:4.84px;font-size:12px;line-height:12px;color:#303030;transform:scaleX(0.9621);transform-origin:left center;">Di-3 09:45-10:30 &gt; D / 5a &gt; Lem &gt; 404</div>
</div>
<div class="r" style="left:186px;top:799px;width:260px;height:1px;background:#c8c8c8;"></div>
<div class="r" style="left:186px;top:800px;width:260px;height:32px;background:#cce4f7;"></div>
<div class="t" style="left:218.00px;top:810.00px;font-size:13px;line-height:13px;font-weight:700;color:#2a2a2a;transform:scaleX(1.0073);transform-origin:left center;">Unverplant</div>
<div class="t" style="left:218.00px;top:842.00px;font-size:13px;line-height:13px;font-weight:700;color:#2a2a2a;transform:scaleX(0.9836);transform-origin:left center;">Summen</div>
<div class="t" style="left:218.00px;top:874.00px;font-size:13px;line-height:13px;font-weight:700;color:#2a2a2a;transform:scaleX(0.9544);transform-origin:left center;">Passende Lehrer</div>
<div class="t" style="left:218.00px;top:906.00px;font-size:13px;line-height:13px;font-weight:700;color:#2a2a2a;transform:scaleX(0.9567);transform-origin:left center;">Passende Räume</div>
<div class="t" style="left:218.00px;top:938.00px;font-size:13px;line-height:13px;font-weight:700;color:#2a2a2a;transform:scaleX(0.9322);transform-origin:left center;">Block</div>
<div class="t" style="left:218.00px;top:970.00px;font-size:13px;line-height:13px;font-weight:700;color:#2a2a2a;transform:scaleX(1.0318);transform-origin:left center;">Zeitkonflikte</div>
<div class="r" style="left:186px;top:992px;width:260px;height:1px;background:#d0d0d0;"></div>
<div class="t" style="left:421.00px;top:1005.84px;font-size:12px;line-height:12px;color:#444;transform:scaleX(0.9800);transform-origin:center center;">...</div>
<svg class="r" style="left:463px;top:190px" width="8" height="12" viewBox="0 0 8 12"><path d="M7 0.8L1.5 6L7 11.2" fill="none" stroke="#666" stroke-width="1.3"/></svg>
<svg class="r" style="left:488px;top:190px" width="8" height="12" viewBox="0 0 8 12"><path d="M1 0.8L6.5 6L1 11.2" fill="none" stroke="#111" stroke-width="1.6"/></svg>
<div class="t" style="left:512.50px;top:189.92px;font-size:12.5px;line-height:12.5px;color:#303030;transform:scaleX(0.8545);transform-origin:left center;">Klassen</div>
<div class="t" style="left:1139.21px;top:189.15px;font-size:14px;line-height:14px;font-weight:700;color:#333;transform:scaleX(1.1559);transform-origin:center center;">5a</div>
<div class="t" style="left:1780.00px;top:189.84px;font-size:12px;line-height:12px;color:#303030;transform:scaleX(0.9933);transform-origin:left center;">Alle Wochen</div>
<svg class="r" style="left:1899px;top:189px" width="8" height="12" viewBox="0 0 8 12"><path d="M7 0.8L1.5 6L7 11.2" fill="none" stroke="#666" stroke-width="1.3"/></svg>
<svg class="r" style="left:1924px;top:189px" width="8" height="12" viewBox="0 0 8 12"><path d="M1 0.8L6.5 6L1 11.2" fill="none" stroke="#111" stroke-width="1.6"/></svg>
<div class="r" style="left:1920px;top:212px;width:20px;height:783px;background:#cad9ef;"></div>
<div class="r" style="left:456px;top:956px;width:1464px;height:38px;background:#cad9ef;"></div>
<div class="r" style="left:456px;top:993px;width:1484px;height:2px;background:#a8a8a8;"></div>
<div class="r" style="left:457px;top:995px;width:1483px;height:14px;background:#f7f7f7;"></div>
<div class="r" style="left:456px;top:212px;width:1464px;height:744px;background:#f4f4f4;"></div>
<div class="r" style="left:456px;top:212px;width:1464px;height:1px;background:#a0a0a0;"></div>
<div class="r" style="left:456px;top:212px;width:1px;height:783px;background:#a0a0a0;"></div>
<div class="r" style="left:457px;top:236px;width:1463px;height:1px;background:#a8a8a8;"></div>
<div class="r" style="left:499px;top:213px;width:1px;height:743px;background:#a8a8a8;"></div>
<div class="r" style="left:783px;top:213px;width:1px;height:743px;background:#a8a8a8;"></div>
<div class="r" style="left:1067px;top:213px;width:1px;height:743px;background:#a8a8a8;"></div>
<div class="r" style="left:1351px;top:213px;width:1px;height:743px;background:#a8a8a8;"></div>
<div class="r" style="left:1635px;top:213px;width:1px;height:743px;background:#a8a8a8;"></div>
<div class="r" style="left:1919px;top:213px;width:1px;height:743px;background:#a8a8a8;"></div>
<div class="t" style="left:474.50px;top:218.84px;font-size:12px;line-height:12px;color:#303030;transform:scaleX(0.9800);transform-origin:center center;">X</div>
<div class="t" style="left:635.66px;top:218.84px;font-size:12px;line-height:12px;color:#303030;transform:scaleX(0.9800);transform-origin:center center;">Mo</div>
<div class="t" style="left:922.33px;top:218.84px;font-size:12px;line-height:12px;color:#303030;transform:scaleX(0.9800);transform-origin:center center;">Di</div>
<div class="t" style="left:1205.67px;top:218.84px;font-size:12px;line-height:12px;color:#303030;transform:scaleX(0.9800);transform-origin:center center;">Mi</div>
<div class="t" style="left:1488.33px;top:218.84px;font-size:12px;line-height:12px;color:#303030;transform:scaleX(0.9800);transform-origin:center center;">Do</div>
<div class="t" style="left:1774.34px;top:218.84px;font-size:12px;line-height:12px;color:#303030;transform:scaleX(0.9800);transform-origin:center center;">Fr</div>
<div class="t" style="left:460.50px;top:240.84px;font-size:12px;line-height:12px;color:#303030;transform:scaleX(0.9800);transform-origin:left center;">1</div>
<div class="r" style="left:457px;top:308px;width:42px;height:1px;background:#a8a8a8;"></div>
<div class="t" style="left:460.50px;top:312.84px;font-size:12px;line-height:12px;color:#303030;transform:scaleX(0.9800);transform-origin:left center;">2</div>
<div class="r" style="left:457px;top:380px;width:42px;height:1px;background:#a8a8a8;"></div>
<div class="t" style="left:460.50px;top:384.84px;font-size:12px;line-height:12px;color:#303030;transform:scaleX(0.9800);transform-origin:left center;">3</div>
<div class="r" style="left:457px;top:452px;width:42px;height:1px;background:#a8a8a8;"></div>
<div class="t" style="left:460.50px;top:456.84px;font-size:12px;line-height:12px;color:#303030;transform:scaleX(0.9800);transform-origin:left center;">4</div>
<div class="r" style="left:457px;top:524px;width:42px;height:1px;background:#a8a8a8;"></div>
<div class="t" style="left:460.50px;top:528.84px;font-size:12px;line-height:12px;color:#303030;transform:scaleX(0.9800);transform-origin:left center;">5</div>
<div class="r" style="left:457px;top:596px;width:42px;height:1px;background:#a8a8a8;"></div>
<div class="t" style="left:460.50px;top:600.84px;font-size:12px;line-height:12px;color:#303030;transform:scaleX(0.9800);transform-origin:left center;">6</div>
<div class="r" style="left:457px;top:668px;width:42px;height:1px;background:#a8a8a8;"></div>
<div class="t" style="left:460.50px;top:672.84px;font-size:12px;line-height:12px;color:#303030;transform:scaleX(0.9800);transform-origin:left center;">7</div>
<div class="r" style="left:457px;top:740px;width:42px;height:1px;background:#a8a8a8;"></div>
<div class="t" style="left:460.50px;top:744.84px;font-size:12px;line-height:12px;color:#303030;transform:scaleX(0.9800);transform-origin:left center;">8</div>
<div class="r" style="left:457px;top:812px;width:42px;height:1px;background:#a8a8a8;"></div>
<div class="t" style="left:460.50px;top:816.84px;font-size:12px;line-height:12px;color:#303030;transform:scaleX(0.9800);transform-origin:left center;">9</div>
<div class="r" style="left:457px;top:884px;width:42px;height:1px;background:#a8a8a8;"></div>
<div class="t" style="left:460.50px;top:888.84px;font-size:12px;line-height:12px;color:#303030;transform:scaleX(0.9800);transform-origin:left center;">10</div>
<div class="r" style="left:457px;top:956px;width:42px;height:1px;background:#a8a8a8;"></div>
<div class="r" style="left:500px;top:237px;width:280px;height:71px;background:linear-gradient(#ffffff,#edf0f7);"></div>
<div class="r" style="left:780px;top:237px;width:3px;height:71px;background:#c8d7ee;"></div>
<div class="r" style="left:500px;top:308px;width:283px;height:1px;background:#a8a8a8;"></div>
<div class="t" style="left:505.00px;top:241.84px;font-size:12px;line-height:12px;font-weight:700;color:#111;">E</div>
<div class="t" style="left:505.00px;top:258.74px;font-size:12px;line-height:12px;font-style:italic;color:#111;">Bot</div>
<div class="t" style="left:505.00px;top:275.64px;font-size:12px;line-height:12px;color:#111;transform:scaleX(0.9800);transform-origin:left center;">404</div>
<div class="r" style="left:500px;top:309px;width:280px;height:71px;background:linear-gradient(#b8f8b8,#96f596);"></div>
<div class="r" style="left:780px;top:309px;width:3px;height:71px;background:#c8d7ee;"></div>
<div class="r" style="left:500px;top:380px;width:283px;height:1px;background:#a8a8a8;"></div>
<div class="r" style="left:779px;top:309px;width:1px;height:71px;background:#80f080;"></div>
<div class="t" style="left:505.00px;top:313.84px;font-size:12px;line-height:12px;font-weight:700;color:#111;">D</div>
<div class="t" style="left:505.00px;top:330.74px;font-size:12px;line-height:12px;font-style:italic;color:#111;">Lem</div>
<div class="t" style="left:505.00px;top:347.64px;font-size:12px;line-height:12px;color:#111;transform:scaleX(0.9800);transform-origin:left center;">404</div>
<div class="r" style="left:500px;top:381px;width:280px;height:71px;background:linear-gradient(#ffffff,#edf0f7);"></div>
<div class="r" style="left:780px;top:381px;width:3px;height:71px;background:#c8d7ee;"></div>
<div class="r" style="left:500px;top:452px;width:283px;height:1px;background:#a8a8a8;"></div>
<div class="t" style="left:505.00px;top:385.84px;font-size:12px;line-height:12px;font-weight:700;color:#111;">BILI</div>
<div class="t" style="left:505.00px;top:402.74px;font-size:12px;line-height:12px;font-style:italic;color:#111;">Bot</div>
<div class="t" style="left:505.00px;top:419.64px;font-size:12px;line-height:12px;color:#111;transform:scaleX(0.9800);transform-origin:left center;">404</div>
<div class="r" style="left:500px;top:453px;width:280px;height:71px;background:linear-gradient(#ffffff,#edf0f7);"></div>
<div class="r" style="left:780px;top:453px;width:3px;height:71px;background:#c8d7ee;"></div>
<div class="r" style="left:500px;top:524px;width:283px;height:1px;background:#a8a8a8;"></div>
<div class="t" style="left:505.00px;top:457.84px;font-size:12px;line-height:12px;font-weight:700;color:#111;">M</div>
<div class="t" style="left:505.00px;top:474.74px;font-size:12px;line-height:12px;font-style:italic;color:#111;">Mra</div>
<div class="t" style="left:505.00px;top:491.64px;font-size:12px;line-height:12px;color:#111;transform:scaleX(0.9800);transform-origin:left center;">404</div>
<div class="r" style="left:500px;top:525px;width:280px;height:71px;background:linear-gradient(#ffffff,#edf0f7);"></div>
<div class="r" style="left:780px;top:525px;width:3px;height:71px;background:#c8d7ee;"></div>
<div class="r" style="left:500px;top:596px;width:283px;height:1px;background:#a8a8a8;"></div>
<div class="t" style="left:505.00px;top:529.84px;font-size:12px;line-height:12px;font-weight:700;color:#111;">NAWI</div>
<div class="t" style="left:505.00px;top:546.74px;font-size:12px;line-height:12px;font-style:italic;color:#111;">Ara</div>
<div class="t" style="left:505.00px;top:563.64px;font-size:12px;line-height:12px;color:#111;transform:scaleX(0.9800);transform-origin:left center;">404</div>
<div class="r" style="left:500px;top:597px;width:280px;height:71px;background:linear-gradient(#ffffff,#edf0f7);"></div>
<div class="r" style="left:780px;top:597px;width:3px;height:71px;background:#c8d7ee;"></div>
<div class="r" style="left:500px;top:668px;width:283px;height:1px;background:#a8a8a8;"></div>
<div class="t" style="left:504.00px;top:601.84px;font-size:12px;line-height:12px;font-weight:700;color:#111;">ER</div>
<div class="t" style="left:504.00px;top:618.74px;font-size:12px;line-height:12px;color:#111;transform:scaleX(0.9800);transform-origin:left center;">5a, 5b, 5c,...</div>
<div class="t" style="left:504.00px;top:635.64px;font-size:12px;line-height:12px;font-style:italic;color:#111;">Lem</div>
<div class="t" style="left:504.00px;top:652.54px;font-size:12px;line-height:12px;color:#111;transform:scaleX(0.9800);transform-origin:left center;">407</div>
<svg class="r" style="left:581px;top:600px" width="9" height="9" viewBox="0 0 9 9"><rect x="0.5" y="0.5" width="8" height="8" fill="#5f95e6" stroke="#4a7fd6"/></svg>
<div class="r" style="left:592px;top:597px;width:1px;height:71px;background:#d0dcea;"></div>
<div class="t" style="left:597.00px;top:601.84px;font-size:12px;line-height:12px;font-weight:700;color:#111;">ET</div>
<div class="t" style="left:597.00px;top:618.74px;font-size:12px;line-height:12px;color:#111;transform:scaleX(0.9800);transform-origin:left center;">5a, 5b, 5c,...</div>
<div class="t" style="left:597.00px;top:635.64px;font-size:12px;line-height:12px;font-style:italic;color:#111;">Rit</div>
<div class="t" style="left:597.00px;top:652.54px;font-size:12px;line-height:12px;color:#111;transform:scaleX(0.9800);transform-origin:left center;">409</div>
<svg class="r" style="left:674px;top:600px" width="9" height="9" viewBox="0 0 9 9"><rect x="0.5" y="0.5" width="8" height="8" fill="#5f95e6" stroke="#4a7fd6"/></svg>
<div class="r" style="left:685px;top:597px;width:1px;height:71px;background:#d0dcea;"></div>
<div class="t" style="left:690.00px;top:601.84px;font-size:12px;line-height:12px;font-weight:700;color:#111;">KR</div>
<div class="t" style="left:690.00px;top:618.74px;font-size:12px;line-height:12px;color:#111;transform:scaleX(0.9800);transform-origin:left center;">5a, 5f</div>
<div class="t" style="left:690.00px;top:635.64px;font-size:12px;line-height:12px;font-style:italic;color:#111;">Hen</div>
<div class="t" style="left:690.00px;top:652.54px;font-size:12px;line-height:12px;color:#111;transform:scaleX(0.9800);transform-origin:left center;">404</div>
<svg class="r" style="left:769px;top:600px" width="9" height="9" viewBox="0 0 9 9"><rect x="0.5" y="0.5" width="8" height="8" fill="#5f95e6" stroke="#4a7fd6"/></svg>
<div class="r" style="left:500px;top:669px;width:283px;height:71px;background:#3e5b8b;"></div>
<div class="r" style="left:500px;top:740px;width:283px;height:1px;background:#8c9ab0;"></div>
<div class="r" style="left:783px;top:669px;width:1px;height:72px;background:#8c9ab0;"></div>
<div class="t" style="left:503.00px;top:672.84px;font-size:12px;line-height:12px;color:#e8ecf2;transform:scaleX(0.9800);transform-origin:left center;">X</div>
<div class="r" style="left:500px;top:741px;width:283px;height:71px;background:#3e5b8b;"></div>
<div class="r" style="left:500px;top:812px;width:283px;height:1px;background:#8c9ab0;"></div>
<div class="r" style="left:783px;top:741px;width:1px;height:72px;background:#8c9ab0;"></div>
<div class="t" style="left:503.00px;top:744.84px;font-size:12px;line-height:12px;color:#e8ecf2;transform:scaleX(0.9800);transform-origin:left center;">X</div>
<div class="r" style="left:500px;top:813px;width:283px;height:71px;background:#3e5b8b;"></div>
<div class="r" style="left:500px;top:884px;width:283px;height:1px;background:#8c9ab0;"></div>
<div class="r" style="left:783px;top:813px;width:1px;height:72px;background:#8c9ab0;"></div>
<div class="t" style="left:503.00px;top:816.84px;font-size:12px;line-height:12px;color:#e8ecf2;transform:scaleX(0.9800);transform-origin:left center;">X</div>
<div class="r" style="left:500px;top:885px;width:283px;height:71px;background:#3e5b8b;"></div>
<div class="r" style="left:500px;top:956px;width:283px;height:1px;background:#8c9ab0;"></div>
<div class="r" style="left:783px;top:885px;width:1px;height:72px;background:#8c9ab0;"></div>
<div class="t" style="left:503.00px;top:888.84px;font-size:12px;line-height:12px;color:#e8ecf2;transform:scaleX(0.9800);transform-origin:left center;">X</div>
<div class="r" style="left:784px;top:237px;width:280px;height:71px;background:linear-gradient(#ffffff,#edf0f7);"></div>
<div class="r" style="left:1064px;top:237px;width:3px;height:71px;background:#c8d7ee;"></div>
<div class="r" style="left:784px;top:308px;width:283px;height:1px;background:#a8a8a8;"></div>
<div class="t" style="left:788.00px;top:241.84px;font-size:12px;line-height:12px;font-weight:700;color:#111;">ER</div>
<div class="t" style="left:788.00px;top:258.74px;font-size:12px;line-height:12px;color:#111;transform:scaleX(0.9800);transform-origin:left center;">5a, 5b, 5c,...</div>
<div class="t" style="left:788.00px;top:275.64px;font-size:12px;line-height:12px;font-style:italic;color:#111;">Lem</div>
<div class="t" style="left:788.00px;top:292.54px;font-size:12px;line-height:12px;color:#111;transform:scaleX(0.9800);transform-origin:left center;">407</div>
<svg class="r" style="left:865px;top:240px" width="9" height="9" viewBox="0 0 9 9"><rect x="0.5" y="0.5" width="8" height="8" fill="#5f95e6" stroke="#4a7fd6"/></svg>
<div class="r" style="left:876px;top:237px;width:1px;height:71px;background:#d0dcea;"></div>
<div class="t" style="left:881.00px;top:241.84px;font-size:12px;line-height:12px;font-weight:700;color:#111;">ET</div>
<div class="t" style="left:881.00px;top:258.74px;font-size:12px;line-height:12px;color:#111;transform:scaleX(0.9800);transform-origin:left center;">5a, 5b, 5c,...</div>
<div class="t" style="left:881.00px;top:275.64px;font-size:12px;line-height:12px;font-style:italic;color:#111;">Rit</div>
<div class="t" style="left:881.00px;top:292.54px;font-size:12px;line-height:12px;color:#111;transform:scaleX(0.9800);transform-origin:left center;">409</div>
<svg class="r" style="left:958px;top:240px" width="9" height="9" viewBox="0 0 9 9"><rect x="0.5" y="0.5" width="8" height="8" fill="#5f95e6" stroke="#4a7fd6"/></svg>
<div class="r" style="left:969px;top:237px;width:1px;height:71px;background:#d0dcea;"></div>
<div class="t" style="left:974.00px;top:241.84px;font-size:12px;line-height:12px;font-weight:700;color:#111;">KR</div>
<div class="t" style="left:974.00px;top:258.74px;font-size:12px;line-height:12px;color:#111;transform:scaleX(0.9800);transform-origin:left center;">5a, 5f</div>
<div class="t" style="left:974.00px;top:275.64px;font-size:12px;line-height:12px;font-style:italic;color:#111;">Hen</div>
<div class="t" style="left:974.00px;top:292.54px;font-size:12px;line-height:12px;color:#111;transform:scaleX(0.9800);transform-origin:left center;">404</div>
<svg class="r" style="left:1053px;top:240px" width="9" height="9" viewBox="0 0 9 9"><rect x="0.5" y="0.5" width="8" height="8" fill="#5f95e6" stroke="#4a7fd6"/></svg>
<div class="r" style="left:784px;top:309px;width:280px;height:71px;background:linear-gradient(#b8f8b8,#96f596);"></div>
<div class="r" style="left:1064px;top:309px;width:3px;height:71px;background:#c8d7ee;"></div>
<div class="r" style="left:784px;top:380px;width:283px;height:1px;background:#a8a8a8;"></div>
<div class="r" style="left:1063px;top:309px;width:1px;height:71px;background:#80f080;"></div>
<div class="t" style="left:789.00px;top:313.84px;font-size:12px;line-height:12px;font-weight:700;color:#111;">KL</div>
<div class="t" style="left:789.00px;top:330.74px;font-size:12px;line-height:12px;font-style:italic;color:#111;">Lem</div>
<div class="t" style="left:789.00px;top:347.64px;font-size:12px;line-height:12px;color:#111;transform:scaleX(0.9800);transform-origin:left center;">404</div>
<div class="r" style="left:784px;top:381px;width:280px;height:71px;background:linear-gradient(#ffffff,#edf0f7);"></div>
<div class="r" style="left:1064px;top:381px;width:3px;height:71px;background:#c8d7ee;"></div>
<div class="r" style="left:784px;top:452px;width:283px;height:1px;background:#a8a8a8;"></div>
<div class="t" style="left:789.00px;top:385.84px;font-size:12px;line-height:12px;font-weight:700;color:#111;">D</div>
<div class="t" style="left:789.00px;top:402.74px;font-size:12px;line-height:12px;font-style:italic;color:#111;">Lem</div>
<div class="t" style="left:789.00px;top:419.64px;font-size:12px;line-height:12px;color:#111;transform:scaleX(0.9800);transform-origin:left center;">404</div>
<div class="r" style="left:785px;top:381px;width:279px;height:71px;background:transparent;box-sizing:border-box;border:2px solid #ff00ff;"></div>
<div class="r" style="left:784px;top:453px;width:280px;height:71px;background:linear-gradient(#b8f8b8,#96f596);"></div>
<div class="r" style="left:1064px;top:453px;width:3px;height:71px;background:#c8d7ee;"></div>
<div class="r" style="left:784px;top:524px;width:283px;height:1px;background:#a8a8a8;"></div>
<div class="r" style="left:1063px;top:453px;width:1px;height:71px;background:#80f080;"></div>
<div class="t" style="left:789.00px;top:457.84px;font-size:12px;line-height:12px;font-weight:700;color:#111;">EK</div>
<div class="t" style="left:789.00px;top:474.74px;font-size:12px;line-height:12px;font-style:italic;color:#111;">Cof</div>
<div class="t" style="left:789.00px;top:491.64px;font-size:12px;line-height:12px;color:#111;transform:scaleX(0.9800);transform-origin:left center;">404</div>
<div class="r" style="left:784px;top:525px;width:280px;height:71px;background:linear-gradient(#ffffff,#edf0f7);"></div>
<div class="r" style="left:1064px;top:525px;width:3px;height:71px;background:#c8d7ee;"></div>
<div class="r" style="left:784px;top:596px;width:283px;height:1px;background:#a8a8a8;"></div>
<div class="t" style="left:789.00px;top:529.84px;font-size:12px;line-height:12px;font-weight:700;color:#111;">SP</div>
<div class="t" style="left:789.00px;top:546.74px;font-size:12px;line-height:12px;font-style:italic;color:#111;">Bst</div>
<div class="t" style="left:789.00px;top:563.64px;font-size:12px;line-height:12px;color:#111;transform:scaleX(0.9800);transform-origin:left center;">Gymnastikhalle</div>
<div class="r" style="left:784px;top:597px;width:280px;height:71px;background:linear-gradient(#ffffff,#edf0f7);"></div>
<div class="r" style="left:1064px;top:597px;width:3px;height:71px;background:#c8d7ee;"></div>
<div class="r" style="left:784px;top:668px;width:283px;height:1px;background:#a8a8a8;"></div>
<div class="t" style="left:789.00px;top:601.84px;font-size:12px;line-height:12px;font-weight:700;color:#111;">E</div>
<div class="t" style="left:789.00px;top:618.74px;font-size:12px;line-height:12px;font-style:italic;color:#111;">Bot</div>
<div class="t" style="left:789.00px;top:635.64px;font-size:12px;line-height:12px;color:#111;transform:scaleX(0.9800);transform-origin:left center;">404</div>
<div class="r" style="left:784px;top:669px;width:283px;height:71px;background:#3e5b8b;"></div>
<div class="r" style="left:784px;top:740px;width:283px;height:1px;background:#8c9ab0;"></div>
<div class="r" style="left:1067px;top:669px;width:1px;height:72px;background:#8c9ab0;"></div>
<div class="t" style="left:787.00px;top:672.84px;font-size:12px;line-height:12px;color:#e8ecf2;transform:scaleX(0.9800);transform-origin:left center;">X</div>
<div class="r" style="left:784px;top:741px;width:283px;height:71px;background:#3e5b8b;"></div>
<div class="r" style="left:784px;top:812px;width:283px;height:1px;background:#8c9ab0;"></div>
<div class="r" style="left:1067px;top:741px;width:1px;height:72px;background:#8c9ab0;"></div>
<div class="t" style="left:787.00px;top:744.84px;font-size:12px;line-height:12px;color:#e8ecf2;transform:scaleX(0.9800);transform-origin:left center;">X</div>
<div class="r" style="left:784px;top:813px;width:283px;height:71px;background:#3e5b8b;"></div>
<div class="r" style="left:784px;top:884px;width:283px;height:1px;background:#8c9ab0;"></div>
<div class="r" style="left:1067px;top:813px;width:1px;height:72px;background:#8c9ab0;"></div>
<div class="t" style="left:787.00px;top:816.84px;font-size:12px;line-height:12px;color:#e8ecf2;transform:scaleX(0.9800);transform-origin:left center;">X</div>
<div class="r" style="left:784px;top:885px;width:283px;height:71px;background:#3e5b8b;"></div>
<div class="r" style="left:784px;top:956px;width:283px;height:1px;background:#8c9ab0;"></div>
<div class="r" style="left:1067px;top:885px;width:1px;height:72px;background:#8c9ab0;"></div>
<div class="t" style="left:787.00px;top:888.84px;font-size:12px;line-height:12px;color:#e8ecf2;transform:scaleX(0.9800);transform-origin:left center;">X</div>
<div class="r" style="left:1068px;top:237px;width:280px;height:71px;background:linear-gradient(#ffffff,#edf0f7);"></div>
<div class="r" style="left:1348px;top:237px;width:3px;height:71px;background:#c8d7ee;"></div>
<div class="r" style="left:1068px;top:308px;width:283px;height:1px;background:#a8a8a8;"></div>
<div class="t" style="left:1073.00px;top:241.84px;font-size:12px;line-height:12px;font-weight:700;color:#111;">E</div>
<div class="t" style="left:1073.00px;top:258.74px;font-size:12px;line-height:12px;font-style:italic;color:#111;">Bot</div>
<div class="t" style="left:1073.00px;top:275.64px;font-size:12px;line-height:12px;color:#111;transform:scaleX(0.9800);transform-origin:left center;">404</div>
<div class="r" style="left:1068px;top:309px;width:280px;height:71px;background:linear-gradient(#ffffff,#edf0f7);"></div>
<div class="r" style="left:1348px;top:309px;width:3px;height:71px;background:#c8d7ee;"></div>
<div class="r" style="left:1068px;top:380px;width:283px;height:1px;background:#a8a8a8;"></div>
<div class="t" style="left:1073.00px;top:313.84px;font-size:12px;line-height:12px;font-weight:700;color:#111;">NAWI</div>
<div class="t" style="left:1073.00px;top:330.74px;font-size:12px;line-height:12px;font-style:italic;color:#111;">Ara</div>
<div class="t" style="left:1073.00px;top:347.64px;font-size:12px;line-height:12px;color:#111;transform:scaleX(0.9800);transform-origin:left center;">122</div>
<div class="r" style="left:1068px;top:381px;width:280px;height:71px;background:linear-gradient(#b8f8b8,#96f596);"></div>
<div class="r" style="left:1348px;top:381px;width:3px;height:71px;background:#c8d7ee;"></div>
<div class="r" style="left:1068px;top:452px;width:283px;height:1px;background:#a8a8a8;"></div>
<div class="r" style="left:1347px;top:381px;width:1px;height:71px;background:#80f080;"></div>
<div class="t" style="left:1073.00px;top:385.84px;font-size:12px;line-height:12px;font-weight:700;color:#111;">D</div>
<div class="t" style="left:1073.00px;top:402.74px;font-size:12px;line-height:12px;font-style:italic;color:#111;">Lem</div>
<div class="t" style="left:1073.00px;top:419.64px;font-size:12px;line-height:12px;color:#111;transform:scaleX(0.9800);transform-origin:left center;">404</div>
<div class="r" style="left:1068px;top:453px;width:280px;height:71px;background:linear-gradient(#ffffff,#edf0f7);"></div>
<div class="r" style="left:1348px;top:453px;width:3px;height:71px;background:#c8d7ee;"></div>
<div class="r" style="left:1068px;top:524px;width:283px;height:1px;background:#a8a8a8;"></div>
<div class="r" style="left:1068px;top:525px;width:280px;height:71px;background:linear-gradient(#ffffff,#edf0f7);"></div>
<div class="r" style="left:1348px;top:525px;width:3px;height:71px;background:#c8d7ee;"></div>
<div class="r" style="left:1068px;top:596px;width:283px;height:1px;background:#a8a8a8;"></div>
<div class="r" style="left:1068px;top:597px;width:280px;height:71px;background:linear-gradient(#ffffff,#edf0f7);"></div>
<div class="r" style="left:1348px;top:597px;width:3px;height:71px;background:#c8d7ee;"></div>
<div class="r" style="left:1068px;top:668px;width:283px;height:1px;background:#a8a8a8;"></div>
<div class="r" style="left:1068px;top:669px;width:283px;height:71px;background:#3e5b8b;"></div>
<div class="r" style="left:1068px;top:740px;width:283px;height:1px;background:#8c9ab0;"></div>
<div class="r" style="left:1351px;top:669px;width:1px;height:72px;background:#8c9ab0;"></div>
<div class="t" style="left:1071.00px;top:672.84px;font-size:12px;line-height:12px;color:#e8ecf2;transform:scaleX(0.9800);transform-origin:left center;">X</div>
<div class="r" style="left:1068px;top:741px;width:283px;height:71px;background:#3e5b8b;"></div>
<div class="r" style="left:1068px;top:812px;width:283px;height:1px;background:#8c9ab0;"></div>
<div class="r" style="left:1351px;top:741px;width:1px;height:72px;background:#8c9ab0;"></div>
<div class="t" style="left:1071.00px;top:744.84px;font-size:12px;line-height:12px;color:#e8ecf2;transform:scaleX(0.9800);transform-origin:left center;">X</div>
<div class="r" style="left:1068px;top:813px;width:283px;height:71px;background:#3e5b8b;"></div>
<div class="r" style="left:1068px;top:884px;width:283px;height:1px;background:#8c9ab0;"></div>
<div class="r" style="left:1351px;top:813px;width:1px;height:72px;background:#8c9ab0;"></div>
<div class="t" style="left:1071.00px;top:816.84px;font-size:12px;line-height:12px;color:#e8ecf2;transform:scaleX(0.9800);transform-origin:left center;">X</div>
<div class="r" style="left:1068px;top:885px;width:283px;height:71px;background:#3e5b8b;"></div>
<div class="r" style="left:1068px;top:956px;width:283px;height:1px;background:#8c9ab0;"></div>
<div class="r" style="left:1351px;top:885px;width:1px;height:72px;background:#8c9ab0;"></div>
<div class="t" style="left:1071.00px;top:888.84px;font-size:12px;line-height:12px;color:#e8ecf2;transform:scaleX(0.9800);transform-origin:left center;">X</div>
<div class="r" style="left:1352px;top:237px;width:280px;height:71px;background:linear-gradient(#ffffff,#edf0f7);"></div>
<div class="r" style="left:1632px;top:237px;width:3px;height:71px;background:#c8d7ee;"></div>
<div class="r" style="left:1352px;top:308px;width:283px;height:1px;background:#a8a8a8;"></div>
<div class="t" style="left:1357.00px;top:241.84px;font-size:12px;line-height:12px;font-weight:700;color:#111;">BK</div>
<div class="t" style="left:1357.00px;top:258.74px;font-size:12px;line-height:12px;font-style:italic;color:#111;">Law</div>
<div class="t" style="left:1357.00px;top:275.64px;font-size:12px;line-height:12px;color:#111;transform:scaleX(0.9800);transform-origin:left center;">03</div>
<div class="r" style="left:1352px;top:309px;width:280px;height:71px;background:linear-gradient(#b8f8b8,#96f596);"></div>
<div class="r" style="left:1632px;top:309px;width:3px;height:71px;background:#c8d7ee;"></div>
<div class="r" style="left:1352px;top:380px;width:283px;height:1px;background:#a8a8a8;"></div>
<div class="r" style="left:1631px;top:309px;width:1px;height:71px;background:#80f080;"></div>
<div class="t" style="left:1357.00px;top:313.84px;font-size:12px;line-height:12px;font-weight:700;color:#111;">EK</div>
<div class="t" style="left:1357.00px;top:330.74px;font-size:12px;line-height:12px;font-style:italic;color:#111;">Cof</div>
<div class="t" style="left:1357.00px;top:347.64px;font-size:12px;line-height:12px;color:#111;transform:scaleX(0.9800);transform-origin:left center;">404</div>
<div class="r" style="left:1352px;top:381px;width:280px;height:71px;background:linear-gradient(#ffffff,#edf0f7);"></div>
<div class="r" style="left:1632px;top:381px;width:3px;height:71px;background:#c8d7ee;"></div>
<div class="r" style="left:1352px;top:452px;width:283px;height:1px;background:#a8a8a8;"></div>
<div class="t" style="left:1357.00px;top:385.84px;font-size:12px;line-height:12px;font-weight:700;color:#111;">E</div>
<div class="t" style="left:1357.00px;top:402.74px;font-size:12px;line-height:12px;font-style:italic;color:#111;">Bot</div>
<div class="t" style="left:1357.00px;top:419.64px;font-size:12px;line-height:12px;color:#111;transform:scaleX(0.9800);transform-origin:left center;">404</div>
<div class="r" style="left:1352px;top:453px;width:280px;height:71px;background:linear-gradient(#ffffff,#edf0f7);"></div>
<div class="r" style="left:1632px;top:453px;width:3px;height:71px;background:#c8d7ee;"></div>
<div class="r" style="left:1352px;top:524px;width:283px;height:1px;background:#a8a8a8;"></div>
<div class="r" style="left:1352px;top:525px;width:280px;height:71px;background:linear-gradient(#ffffff,#edf0f7);"></div>
<div class="r" style="left:1632px;top:525px;width:3px;height:71px;background:#c8d7ee;"></div>
<div class="r" style="left:1352px;top:596px;width:283px;height:1px;background:#a8a8a8;"></div>
<div class="t" style="left:1357.00px;top:529.84px;font-size:12px;line-height:12px;font-weight:700;color:#111;">NAWI</div>
<div class="t" style="left:1357.00px;top:546.74px;font-size:12px;line-height:12px;font-style:italic;color:#111;">Ara</div>
<div class="t" style="left:1357.00px;top:563.64px;font-size:12px;line-height:12px;color:#111;transform:scaleX(0.9800);transform-origin:left center;">404</div>
<div class="r" style="left:1352px;top:597px;width:280px;height:71px;background:linear-gradient(#ffffff,#edf0f7);"></div>
<div class="r" style="left:1632px;top:597px;width:3px;height:71px;background:#c8d7ee;"></div>
<div class="r" style="left:1352px;top:668px;width:283px;height:1px;background:#a8a8a8;"></div>
<div class="t" style="left:1357.00px;top:601.84px;font-size:12px;line-height:12px;font-weight:700;color:#111;">NAWI</div>
<div class="t" style="left:1357.00px;top:618.74px;font-size:12px;line-height:12px;font-style:italic;color:#111;">Ara</div>
<div class="t" style="left:1357.00px;top:635.64px;font-size:12px;line-height:12px;color:#111;transform:scaleX(0.9800);transform-origin:left center;">404</div>
<div class="r" style="left:1352px;top:669px;width:283px;height:71px;background:#3e5b8b;"></div>
<div class="r" style="left:1352px;top:740px;width:283px;height:1px;background:#8c9ab0;"></div>
<div class="r" style="left:1635px;top:669px;width:1px;height:72px;background:#8c9ab0;"></div>
<div class="t" style="left:1355.00px;top:672.84px;font-size:12px;line-height:12px;color:#e8ecf2;transform:scaleX(0.9800);transform-origin:left center;">X</div>
<div class="r" style="left:1352px;top:741px;width:283px;height:71px;background:#3e5b8b;"></div>
<div class="r" style="left:1352px;top:812px;width:283px;height:1px;background:#8c9ab0;"></div>
<div class="r" style="left:1635px;top:741px;width:1px;height:72px;background:#8c9ab0;"></div>
<div class="t" style="left:1355.00px;top:744.84px;font-size:12px;line-height:12px;color:#e8ecf2;transform:scaleX(0.9800);transform-origin:left center;">X</div>
<div class="r" style="left:1352px;top:813px;width:283px;height:71px;background:#3e5b8b;"></div>
<div class="r" style="left:1352px;top:884px;width:283px;height:1px;background:#8c9ab0;"></div>
<div class="r" style="left:1635px;top:813px;width:1px;height:72px;background:#8c9ab0;"></div>
<div class="t" style="left:1355.00px;top:816.84px;font-size:12px;line-height:12px;color:#e8ecf2;transform:scaleX(0.9800);transform-origin:left center;">X</div>
<div class="r" style="left:1352px;top:885px;width:283px;height:71px;background:#3e5b8b;"></div>
<div class="r" style="left:1352px;top:956px;width:283px;height:1px;background:#8c9ab0;"></div>
<div class="r" style="left:1635px;top:885px;width:1px;height:72px;background:#8c9ab0;"></div>
<div class="t" style="left:1355.00px;top:888.84px;font-size:12px;line-height:12px;color:#e8ecf2;transform:scaleX(0.9800);transform-origin:left center;">X</div>
<div class="r" style="left:1636px;top:237px;width:280px;height:71px;background:linear-gradient(#ffffff,#edf0f7);"></div>
<div class="r" style="left:1916px;top:237px;width:3px;height:71px;background:#c8d7ee;"></div>
<div class="r" style="left:1636px;top:308px;width:283px;height:1px;background:#a8a8a8;"></div>
<div class="t" style="left:1641.00px;top:241.84px;font-size:12px;line-height:12px;font-weight:700;color:#111;">E</div>
<div class="t" style="left:1641.00px;top:258.74px;font-size:12px;line-height:12px;font-style:italic;color:#111;">Bot</div>
<div class="t" style="left:1641.00px;top:275.64px;font-size:12px;line-height:12px;color:#111;transform:scaleX(0.9800);transform-origin:left center;">404</div>
<div class="r" style="left:1636px;top:309px;width:280px;height:71px;background:linear-gradient(#ffffff,#edf0f7);"></div>
<div class="r" style="left:1916px;top:309px;width:3px;height:71px;background:#c8d7ee;"></div>
<div class="r" style="left:1636px;top:380px;width:283px;height:1px;background:#a8a8a8;"></div>
<div class="t" style="left:1641.00px;top:313.84px;font-size:12px;line-height:12px;font-weight:700;color:#111;">MU</div>
<div class="t" style="left:1641.00px;top:330.74px;font-size:12px;line-height:12px;font-style:italic;color:#111;">Mec</div>
<div class="t" style="left:1641.00px;top:347.64px;font-size:12px;line-height:12px;color:#111;transform:scaleX(0.9800);transform-origin:left center;">023</div>
<div class="r" style="left:1636px;top:381px;width:280px;height:71px;background:linear-gradient(#b8f8b8,#96f596);"></div>
<div class="r" style="left:1916px;top:381px;width:3px;height:71px;background:#c8d7ee;"></div>
<div class="r" style="left:1636px;top:452px;width:283px;height:1px;background:#a8a8a8;"></div>
<div class="r" style="left:1915px;top:381px;width:1px;height:71px;background:#80f080;"></div>
<div class="t" style="left:1641.00px;top:385.84px;font-size:12px;line-height:12px;font-weight:700;color:#111;">D</div>
<div class="t" style="left:1641.00px;top:402.74px;font-size:12px;line-height:12px;font-style:italic;color:#111;">Lem</div>
<div class="t" style="left:1641.00px;top:419.64px;font-size:12px;line-height:12px;color:#111;transform:scaleX(0.9800);transform-origin:left center;">404</div>
<div class="r" style="left:1636px;top:453px;width:280px;height:71px;background:linear-gradient(#b8f8b8,#96f596);"></div>
<div class="r" style="left:1916px;top:453px;width:3px;height:71px;background:#c8d7ee;"></div>
<div class="r" style="left:1636px;top:524px;width:283px;height:1px;background:#a8a8a8;"></div>
<div class="r" style="left:1915px;top:453px;width:1px;height:71px;background:#80f080;"></div>
<div class="t" style="left:1641.00px;top:457.84px;font-size:12px;line-height:12px;font-weight:700;color:#111;">D</div>
<div class="t" style="left:1641.00px;top:474.74px;font-size:12px;line-height:12px;font-style:italic;color:#111;">Lem</div>
<div class="t" style="left:1641.00px;top:491.64px;font-size:12px;line-height:12px;color:#111;transform:scaleX(0.9800);transform-origin:left center;">404</div>
<div class="r" style="left:1636px;top:525px;width:280px;height:71px;background:linear-gradient(#ffffff,#edf0f7);"></div>
<div class="r" style="left:1916px;top:525px;width:3px;height:71px;background:#c8d7ee;"></div>
<div class="r" style="left:1636px;top:596px;width:283px;height:1px;background:#a8a8a8;"></div>
<div class="t" style="left:1641.00px;top:529.84px;font-size:12px;line-height:12px;font-weight:700;color:#111;">M</div>
<div class="t" style="left:1641.00px;top:546.74px;font-size:12px;line-height:12px;font-style:italic;color:#111;">Mra</div>
<div class="t" style="left:1641.00px;top:563.64px;font-size:12px;line-height:12px;color:#111;transform:scaleX(0.9800);transform-origin:left center;">404</div>
<div class="r" style="left:1636px;top:597px;width:280px;height:71px;background:linear-gradient(#ffffff,#edf0f7);"></div>
<div class="r" style="left:1916px;top:597px;width:3px;height:71px;background:#c8d7ee;"></div>
<div class="r" style="left:1636px;top:668px;width:283px;height:1px;background:#a8a8a8;"></div>
<div class="t" style="left:1641.00px;top:601.84px;font-size:12px;line-height:12px;font-weight:700;color:#111;">M</div>
<div class="t" style="left:1641.00px;top:618.74px;font-size:12px;line-height:12px;font-style:italic;color:#111;">Mra</div>
<div class="t" style="left:1641.00px;top:635.64px;font-size:12px;line-height:12px;color:#111;transform:scaleX(0.9800);transform-origin:left center;">404</div>
<div class="r" style="left:1636px;top:669px;width:283px;height:71px;background:#cad9ef;"></div>
<div class="r" style="left:1636px;top:740px;width:283px;height:1px;background:#a8a8a8;"></div>
<div class="r" style="left:1636px;top:741px;width:283px;height:71px;background:#cad9ef;"></div>
<div class="r" style="left:1636px;top:812px;width:283px;height:1px;background:#a8a8a8;"></div>
<div class="r" style="left:1636px;top:813px;width:283px;height:71px;background:#3e5b8b;"></div>
<div class="r" style="left:1636px;top:884px;width:283px;height:1px;background:#8c9ab0;"></div>
<div class="t" style="left:1639.00px;top:816.84px;font-size:12px;line-height:12px;color:#e8ecf2;transform:scaleX(0.9800);transform-origin:left center;">X</div>
<div class="r" style="left:1636px;top:885px;width:283px;height:71px;background:#3e5b8b;"></div>
<div class="r" style="left:1636px;top:956px;width:283px;height:1px;background:#8c9ab0;"></div>
<div class="t" style="left:1639.00px;top:888.84px;font-size:12px;line-height:12px;color:#e8ecf2;transform:scaleX(0.9800);transform-origin:left center;">X</div>
<svg class="r" style="left:1922px;top:919px" width="16" height="16" viewBox="0 0 16 16"><circle cx="8" cy="8" r="7" fill="#2b4fd8" stroke="#1a2f90" stroke-width="1"/><circle cx="8" cy="8" r="5.2" fill="none" stroke="#fff" stroke-width="1"/><rect x="4.5" y="7" width="7" height="2" fill="#fff"/></svg>
<svg class="r" style="left:1922px;top:937px" width="16" height="16" viewBox="0 0 16 16"><circle cx="8" cy="8" r="7" fill="#2b4fd8" stroke="#1a2f90" stroke-width="1"/><circle cx="8" cy="8" r="5.2" fill="none" stroke="#fff" stroke-width="1"/><rect x="4.5" y="7" width="7" height="2" fill="#fff"/><rect x="7" y="4.5" width="2" height="7" fill="#fff"/></svg>
<svg class="r" style="left:1922px;top:955px" width="16" height="16" viewBox="0 0 16 16"><circle cx="8" cy="8" r="7" fill="#fff" stroke="#22b022" stroke-width="1.5"/><text x="8" y="11.5" font-family="Liberation Serif" font-size="10" text-anchor="middle" fill="#111">a</text></svg>
<svg class="r" style="left:1886px;top:973px" width="16" height="16" viewBox="0 0 16 16"><circle cx="8" cy="8" r="7" fill="#2b4fd8" stroke="#1a2f90" stroke-width="1"/><circle cx="8" cy="8" r="5.2" fill="none" stroke="#fff" stroke-width="1"/><rect x="4.5" y="7" width="7" height="2" fill="#fff"/></svg>
<svg class="r" style="left:1904px;top:973px" width="16" height="16" viewBox="0 0 16 16"><circle cx="8" cy="8" r="7" fill="#2b4fd8" stroke="#1a2f90" stroke-width="1"/><circle cx="8" cy="8" r="5.2" fill="none" stroke="#fff" stroke-width="1"/><rect x="4.5" y="7" width="7" height="2" fill="#fff"/><rect x="7" y="4.5" width="2" height="7" fill="#fff"/></svg>
<svg class="r" style="left:1922px;top:973px" width="16" height="16" viewBox="0 0 16 16"><circle cx="8" cy="8" r="7" fill="#fff" stroke="#22b022" stroke-width="1.5"/><text x="8" y="12.5" font-family="Liberation Serif" font-size="14" text-anchor="middle" fill="#111">a</text></svg>
<div class="r" style="left:457px;top:1009px;width:1483px;height:24px;background:#ffffff;"></div>
<div class="r" style="left:456px;top:995px;width:1px;height:14px;background:#a0a0a0;"></div>
<div class="r" style="left:557px;top:1009px;width:1383px;height:1px;background:#d4d4d4;"></div>
<div class="r" style="left:457px;top:1009px;width:100px;height:24px;background:#f8f8f8;box-sizing:border-box;border-left:1px solid #a8a8a8;"></div>
<div class="r" style="left:457px;top:1032px;width:100px;height:1px;background:#909090;"></div>
<div class="r" style="left:557px;top:1009px;width:98px;height:23px;background:#efefef;box-sizing:border-box;border:1px solid #c4c4c4;border-bottom-color:#e0e0e0;"></div>
<div class="r" style="left:654px;top:1009px;width:98px;height:23px;background:#efefef;box-sizing:border-box;border:1px solid #c4c4c4;border-bottom-color:#e0e0e0;"></div>
<div class="t" style="left:500.33px;top:1014.34px;font-size:12px;line-height:12px;color:#333;transform:scaleX(0.8241);transform-origin:center center;">5a</div>
<div class="t" style="left:592.83px;top:1013.84px;font-size:12px;line-height:12px;color:#333;transform:scaleX(0.9800);transform-origin:center center;">Lem</div>
<div class="t" style="left:692.99px;top:1013.84px;font-size:12px;line-height:12px;color:#333;transform:scaleX(0.9800);transform-origin:center center;">404</div>
<div class="r" style="left:20px;top:1033px;width:1920px;height:1px;background:#d8d8d8;"></div>
<div class="r" style="left:20px;top:1034px;width:1920px;height:26px;background:#f0f0f0;"></div>
<div class="t" style="left:22.00px;top:1040.84px;font-size:12px;line-height:12px;color:#1e1e1e;transform:scaleX(0.9281);transform-origin:left center;">Schujahr 2021/2022, Gültig: So 01.08.2021 bis So 31.07.2022</div>
<div class="r" style="left:981px;top:1036px;width:1px;height:22px;background:#d0d0d0;"></div>
<div class="t" style="left:986.00px;top:1040.84px;font-size:12px;line-height:12px;font-weight:700;color:#1e1e1e;transform:scaleX(0.9496);transform-origin:left center;">Dieser Plan gab</div>
<div class="r" style="left:1628px;top:1036px;width:1px;height:22px;background:#d0d0d0;"></div>
<div class="r" style="left:1915px;top:1036px;width:1px;height:22px;background:#d0d0d0;"></div>
<svg class="r" style="left:1632px;top:1038px" width="16" height="17" viewBox="0 0 16 17"><path d="M0.8 1.2h14.4v2.6H9.3V15.5H6.7V3.8H0.8z" fill="#fff3ee" stroke="#e8301a" stroke-width="1.3"/><rect x="6" y="2" width="4" height="3" fill="#9a9a9a"/></svg>
<div class="t" style="left:1651.50px;top:1040.84px;font-size:12px;line-height:12px;color:#1e1e1e;transform:scaleX(1.0081);transform-origin:left center;">Nicht verbunden ! (offline)</div>
<div class="r" style="left:1062px;top:418px;width:316px;height:642px;background:#ffffff;box-sizing:border-box;border:1px solid #c8c8c8;box-shadow:2px 3px 3px rgba(0,0,0,0.35);"></div>
<div class="t" style="left:1096.00px;top:425.84px;font-size:12px;line-height:12px;color:#303030;transform:scaleX(0.9800);transform-origin:left center;">Veranstaltung/Termin bearbeiten</div>
<div class="t" style="left:1299.65px;top:425.84px;font-size:12px;line-height:12px;color:#303030;transform:scaleX(0.9800);transform-origin:right center;">Ctrl+Enter</div>
<div class="t" style="left:1096.00px;top:447.84px;font-size:12px;line-height:12px;color:#303030;transform:scaleX(0.9800);transform-origin:left center;">Termindetails anzeigen</div>
<div class="t" style="left:1307.65px;top:447.84px;font-size:12px;line-height:12px;color:#303030;transform:scaleX(0.9800);transform-origin:right center;">Ctrl+F12</div>
<div class="t" style="left:1096.00px;top:469.84px;font-size:12px;line-height:12px;color:#7c7c7c;transform:scaleX(0.9800);transform-origin:left center;">Andere Position anzeigen</div>
<div class="t" style="left:1325.32px;top:469.84px;font-size:12px;line-height:12px;color:#7c7c7c;transform:scaleX(0.9800);transform-origin:right center;">Enter</div>
<div class="r" style="left:1095px;top:489px;width:280px;height:1px;background:#d7d7d7;"></div>
<div class="t" style="left:1096.00px;top:498.84px;font-size:12px;line-height:12px;color:#303030;transform:scaleX(0.9800);transform-origin:left center;">Klasse anzeigen</div>
<div class="t" style="left:1340.00px;top:498.84px;font-size:12px;line-height:12px;color:#303030;transform:scaleX(0.9800);transform-origin:right center;">F6</div>
<div class="t" style="left:1096.00px;top:520.84px;font-size:12px;line-height:12px;color:#303030;transform:scaleX(0.9800);transform-origin:left center;">Lehrer anzeigen</div>
<div class="t" style="left:1340.00px;top:520.84px;font-size:12px;line-height:12px;color:#303030;transform:scaleX(0.9800);transform-origin:right center;">F7</div>
<div class="t" style="left:1096.00px;top:542.84px;font-size:12px;line-height:12px;color:#303030;transform:scaleX(0.9800);transform-origin:left center;">Raum anzeigen</div>
<div class="t" style="left:1340.00px;top:542.84px;font-size:12px;line-height:12px;color:#303030;transform:scaleX(0.9800);transform-origin:right center;">F8</div>
<div class="t" style="left:1096.00px;top:564.84px;font-size:12px;line-height:12px;color:#303030;transform:scaleX(0.9800);transform-origin:left center;">Zusatzplanfenster anzeigen</div>
<div class="t" style="left:1312.31px;top:564.84px;font-size:12px;line-height:12px;color:#303030;transform:scaleX(0.9800);transform-origin:right center;">Alt+F12</div>
<div class="r" style="left:1095px;top:584px;width:280px;height:1px;background:#d7d7d7;"></div>
<div class="t" style="left:1096.00px;top:593.84px;font-size:12px;line-height:12px;color:#303030;transform:scaleX(0.9800);transform-origin:left center;">Neue Veranstaltung/Termin</div>
<div class="t" style="left:1340.00px;top:593.84px;font-size:12px;line-height:12px;color:#303030;transform:scaleX(0.9800);transform-origin:right center;">F2</div>
<div class="t" style="left:1096.00px;top:615.84px;font-size:12px;line-height:12px;color:#303030;transform:scaleX(0.9800);transform-origin:left center;">Termin duplizieren</div>
<div class="t" style="left:1318.98px;top:615.84px;font-size:12px;line-height:12px;color:#303030;transform:scaleX(0.9800);transform-origin:right center;">Alt+F2</div>
<div class="t" style="left:1096.00px;top:637.84px;font-size:12px;line-height:12px;color:#303030;transform:scaleX(0.9800);transform-origin:left center;">Termin löschen</div>
<div class="t" style="left:1304.97px;top:637.84px;font-size:12px;line-height:12px;color:#303030;transform:scaleX(0.9800);transform-origin:right center;">Shift+Del</div>
<div class="r" style="left:1095px;top:657px;width:280px;height:1px;background:#d7d7d7;"></div>
<div class="t" style="left:1096.00px;top:666.84px;font-size:12px;line-height:12px;color:#7c7c7c;transform:scaleX(0.9800);transform-origin:left center;">Termin verplanen</div>
<div class="t" style="left:1340.00px;top:666.84px;font-size:12px;line-height:12px;color:#7c7c7c;transform:scaleX(0.9800);transform-origin:right center;">F3</div>
<div class="t" style="left:1096.00px;top:688.84px;font-size:12px;line-height:12px;color:#303030;transform:scaleX(0.9800);transform-origin:left center;">Termin entfernen</div>
<div class="t" style="left:1310.32px;top:688.84px;font-size:12px;line-height:12px;color:#303030;transform:scaleX(0.9800);transform-origin:right center;">Ctrl+Del</div>
<div class="t" style="left:1096.00px;top:710.84px;font-size:12px;line-height:12px;color:#303030;transform:scaleX(0.9800);transform-origin:left center;">Termin automatisch verschieben</div>
<div class="r" style="left:1095px;top:730px;width:280px;height:1px;background:#d7d7d7;"></div>
<div class="t" style="left:1096.00px;top:739.84px;font-size:12px;line-height:12px;color:#303030;transform:scaleX(0.9800);transform-origin:left center;">Neue Sperrung</div>
<div class="t" style="left:1340.00px;top:739.84px;font-size:12px;line-height:12px;color:#303030;transform:scaleX(0.9800);transform-origin:right center;">F4</div>
<div class="t" style="left:1096.00px;top:761.84px;font-size:12px;line-height:12px;color:#303030;transform:scaleX(0.9800);transform-origin:left center;">Neue Kernzeit</div>
<div class="t" style="left:1334.21px;top:761.84px;font-size:12px;line-height:12px;color:#303030;transform:scaleX(0.9800);transform-origin:right center;">F11</div>
<div class="t" style="left:1096.00px;top:783.84px;font-size:12px;line-height:12px;color:#7c7c7c;transform:scaleX(0.9800);transform-origin:left center;">Zeitpräferenz bearbeiten</div>
<div class="t" style="left:1308.98px;top:783.84px;font-size:12px;line-height:12px;color:#7c7c7c;transform:scaleX(0.9800);transform-origin:right center;">Shift+F9</div>
<div class="t" style="left:1096.00px;top:805.84px;font-size:12px;line-height:12px;color:#303030;transform:scaleX(0.9800);transform-origin:left center;">Zeitpräferenzen</div>
<div class="t" style="left:1096.00px;top:827.84px;font-size:12px;line-height:12px;color:#7c7c7c;transform:scaleX(0.9800);transform-origin:left center;">Zeitpräferenz löschen</div>
<div class="t" style="left:1314.33px;top:827.84px;font-size:12px;line-height:12px;color:#7c7c7c;transform:scaleX(0.9800);transform-origin:right center;">Ctrl+F9</div>
<div class="r" style="left:1095px;top:847px;width:280px;height:1px;background:#d7d7d7;"></div>
<div class="t" style="left:1096.00px;top:856.84px;font-size:12px;line-height:12px;color:#303030;transform:scaleX(0.9800);transform-origin:left center;">Termindauer verlängern</div>
<div class="t" style="left:1340.00px;top:856.84px;font-size:12px;line-height:12px;color:#303030;transform:scaleX(0.9800);transform-origin:right center;">F9</div>
<div class="t" style="left:1096.00px;top:878.84px;font-size:12px;line-height:12px;color:#7c7c7c;transform:scaleX(0.9800);transform-origin:left center;">Termindauer verkürzen</div>
<div class="t" style="left:1314.33px;top:878.84px;font-size:12px;line-height:12px;color:#7c7c7c;transform:scaleX(0.9800);transform-origin:right center;">Ctrl+F9</div>
<div class="t" style="left:1096.00px;top:900.84px;font-size:12px;line-height:12px;color:#303030;transform:scaleX(0.9800);transform-origin:left center;">Terminzeitspanne bearbeiten</div>
<div class="t" style="left:1318.98px;top:900.84px;font-size:12px;line-height:12px;color:#303030;transform:scaleX(0.9800);transform-origin:right center;">Alt+F9</div>
<div class="t" style="left:1096.00px;top:922.84px;font-size:12px;line-height:12px;color:#303030;transform:scaleX(0.9800);transform-origin:left center;">Termin teilen</div>
<div class="t" style="left:1302.30px;top:922.84px;font-size:12px;line-height:12px;color:#303030;transform:scaleX(0.9800);transform-origin:right center;">Shift+F10</div>
<div class="t" style="left:1096.00px;top:944.84px;font-size:12px;line-height:12px;color:#303030;transform:scaleX(0.9800);transform-origin:left center;">Termin(e) kopieren</div>
<div class="t" style="left:1096.00px;top:966.84px;font-size:12px;line-height:12px;color:#303030;transform:scaleX(0.9800);transform-origin:left center;">Termin(e) verschieben</div>
<div class="t" style="left:1096.00px;top:988.84px;font-size:12px;line-height:12px;color:#303030;transform:scaleX(0.9800);transform-origin:left center;">Einzeltermine verplanen</div>
<div class="r" style="left:1095px;top:1008px;width:280px;height:1px;background:#d7d7d7;"></div>
<div class="t" style="left:1096.00px;top:1017.84px;font-size:12px;line-height:12px;color:#303030;transform:scaleX(0.9800);transform-origin:left center;">Termin fixieren</div>
<div class="t" style="left:1314.33px;top:1017.84px;font-size:12px;line-height:12px;color:#303030;transform:scaleX(0.9800);transform-origin:right center;">Ctrl+F4</div>
<div class="t" style="left:1096.00px;top:1039.84px;font-size:12px;line-height:12px;color:#303030;transform:scaleX(0.9800);transform-origin:left center;">Termin nicht fixieren</div>
<div class="t" style="left:1308.98px;top:1039.84px;font-size:12px;line-height:12px;color:#303030;transform:scaleX(0.9800);transform-origin:right center;">Shift+F4</div>
<svg class="r" style="left:0;top:0" width="1960" height="1080" viewBox="0 0 1960 1080"><rect x="776.5" y="377" width="288" height="74" rx="17" fill="none" stroke="#ff6a06" stroke-width="4"/><rect x="1064.5" y="603.5" width="307" height="34" rx="10" fill="none" stroke="#ff6a06" stroke-width="4"/><path d="M991 470.5L1055 578" stroke="#ff6a06" stroke-width="4" stroke-linecap="round"/><path d="M1062.5 590.5L1042 585.5L1067.8 570Z" fill="#ff6a06"/></svg>

<svg class="r" style="left:0;top:790px" width="240" height="200" viewBox="0 790 240 200">
<!-- Unverplant icon -->
<defs><linearGradient id="gUv" x1="0" y1="0" x2="0" y2="1"><stop offset="0" stop-color="#8ab4f0"/><stop offset="1" stop-color="#4a80d8"/></linearGradient></defs>
<rect x="198.5" y="809.5" width="15" height="7.5" rx="3.5" fill="url(#gUv)" stroke="#2a5aa8" stroke-width="0.9"/>
<path d="M203.5 815.5h5v-2.5l5.5 5.5-5.5 5.5v-2.5h-5z" fill="#e4ecfa" stroke="#1a3a98" stroke-width="1"/>
<!-- Summen -->
<path d="M200 843h11v3h-1.5l-0.5-1.5h-6l4 4.5-4 4.5h6l0.5-1.5h1.5v3h-11v-1l5-5-5-5z" fill="#23357a"/>
<!-- Passende Lehrer -->
<circle cx="203" cy="876" r="3" fill="#d0a040"/><circle cx="208.5" cy="876.5" r="3" fill="#888"/>
<path d="M198 888c0-5 2-7 5-7s5 2 5 7z" fill="#5a80d0"/>
<path d="M204 889c0-5 2-6.5 4.5-6.5s4.5 1.5 4.5 6.5z" fill="#40a040"/>
<circle cx="202.8" cy="878" r="2.6" fill="#f4c060"/><circle cx="208.5" cy="879" r="2.6" fill="#f4c060"/>
<!-- Passende Raeume -->
<path d="M199.5 909.5L202.5 905.5H213.5L210.5 909.5Z" fill="#f4f8fe" stroke="#5a80c8" stroke-width="0.9"/>
<path d="M210.5 909.5L213.5 905.5V916.5L210.5 920.5Z" fill="#dce8fa" stroke="#5a80c8" stroke-width="0.9"/>
<rect x="199.5" y="909.5" width="11" height="11" fill="#fff" stroke="#5a80c8" stroke-width="0.9"/>
<!-- Block -->
<rect x="200.5" y="938.5" width="12" height="12" rx="1" fill="#5a8eea" stroke="#3a6ed0"/>
<!-- Zeitkonflikte -->
<path d="M205 969h8l-4 5h3l-8 9 2.5-6h-3z" fill="#f6c91e" stroke="#a88010" stroke-width="0.8"/>
</svg>

</body></html>
